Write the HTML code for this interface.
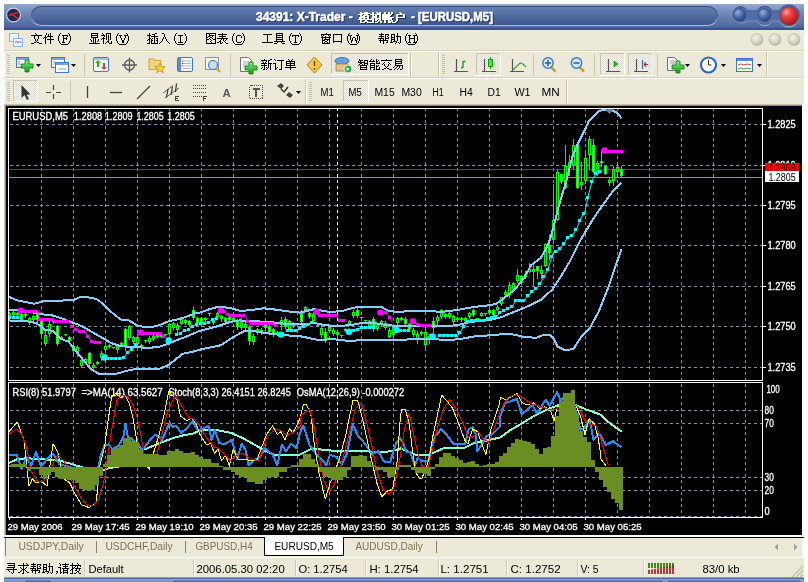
<!DOCTYPE html>
<html><head><meta charset="utf-8"><style>
html,body{margin:0;padding:0;background:#fff;width:808px;height:582px;overflow:hidden}
svg{position:absolute;left:0;top:0;display:block;will-change:transform}
text{font-family:"Liberation Sans",sans-serif}
</style></head><body>
<svg width="808" height="582" viewBox="0 0 808 582" shape-rendering="auto">
<defs>
<linearGradient id="tb" x1="0" y1="0" x2="0" y2="1">
 <stop offset="0" stop-color="#93a9cf"/><stop offset="0.3" stop-color="#768dba"/><stop offset="0.7" stop-color="#5a72a5"/><stop offset="1" stop-color="#475f96"/></linearGradient>
<linearGradient id="pill" x1="0" y1="0" x2="0" y2="1">
 <stop offset="0" stop-color="#4a6aa2"/><stop offset="0.5" stop-color="#5673aa"/><stop offset="1" stop-color="#3f5b94"/></linearGradient>
<radialGradient id="btn" cx="0.35" cy="0.3" r="0.8">
 <stop offset="0" stop-color="#8fb0e0"/><stop offset="0.5" stop-color="#4a6aa8"/><stop offset="1" stop-color="#223a70"/></radialGradient>
<radialGradient id="rbtn" cx="0.35" cy="0.3" r="0.8">
 <stop offset="0" stop-color="#ff9a9a"/><stop offset="0.35" stop-color="#e84040"/><stop offset="1" stop-color="#a81010"/></radialGradient>
<radialGradient id="gbtn" cx="0.4" cy="0.35" r="0.7">
 <stop offset="0" stop-color="#f4f2e8"/><stop offset="0.6" stop-color="#d6d3c4"/><stop offset="1" stop-color="#b3ae98"/></radialGradient>
<pattern id="chk" width="2" height="2" patternUnits="userSpaceOnUse"><rect width="2" height="2" fill="#f6f5ef"/><rect width="1" height="1" fill="#e0ddd0"/><rect x="1" y="1" width="1" height="1" fill="#e0ddd0"/></pattern>
<linearGradient id="gplus" x1="0" y1="0" x2="0" y2="1"><stop offset="0" stop-color="#7ef07e"/><stop offset="1" stop-color="#10a010"/></linearGradient>
</defs>
<rect x="4" y="4" width="800" height="26" fill="url(#tb)"/>
<rect x="4" y="28" width="800" height="2" fill="#3a5189"/>
<defs><linearGradient id="pstroke" x1="0" y1="0" x2="0" y2="1"><stop offset="0" stop-color="#33497a"/><stop offset="0.5" stop-color="#4a639a"/><stop offset="1" stop-color="#a8c0e6"/></linearGradient><linearGradient id="pfill" x1="0" y1="0" x2="0" y2="1"><stop offset="0" stop-color="#6580b1"/><stop offset="0.5" stop-color="#516ba0"/><stop offset="1" stop-color="#3d568e"/></linearGradient></defs>
<rect x="31.5" y="6.5" width="686" height="19" rx="9.5" fill="url(#pfill)" stroke="url(#pstroke)" stroke-width="1.2"/>
<circle cx="13.5" cy="15" r="6.9" fill="#17295a" stroke="#d0d4da" stroke-width="1.2"/>
<path d="M9.5 15.5 Q13 14.5 17.5 12.5 M11 14 Q14 15.5 17.5 18.5" stroke="#f01818" stroke-width="1.7" stroke-linecap="round" fill="none"/>
<path d="M739.6 6.5 a8.4 8.4 0 0 1 7.5 4.5 h10 a8.4 8.4 0 0 1 15 0 h7 a11 11 0 1 1 0 10 h-7 a8.4 8.4 0 0 1 -15 0 h-10 a8.4 8.4 0 1 1 -7.5 -14.5z" fill="#536ea4" stroke="url(#pstroke)" stroke-width="1"/>
<circle cx="739.6" cy="14.9" r="6.3" fill="url(#btn)" stroke="#2c4478" stroke-width="0.6"/>
<circle cx="764.6" cy="14.9" r="6.3" fill="url(#btn)" stroke="#2c4478" stroke-width="0.6"/>
<circle cx="789.1" cy="15.9" r="9" fill="url(#rbtn)" stroke="#8a2020" stroke-width="0.6"/>
<g font-family="Liberation Sans" font-weight="bold" font-size="12">
<text x="257" y="22" fill="#1c2b4c" stroke="#1c2b4c" stroke-width="0.45" opacity="0.8">34391: X-Trader -</text>
<text x="256" y="21" fill="#ffffff" stroke="#fff" stroke-width="0.45">34391: X-Trader -</text>
<text x="412" y="22" fill="#1c2b4c" stroke="#1c2b4c" stroke-width="0.45" opacity="0.8" textLength="82" lengthAdjust="spacingAndGlyphs">- [EURUSD,M5]</text>
<text x="411" y="21" fill="#ffffff" stroke="#fff" stroke-width="0.45" textLength="82" lengthAdjust="spacingAndGlyphs">- [EURUSD,M5]</text>
</g>
<path fill="#22335a" d="M361 13h2v1h-2zM365 13h4v1h-4zM373 13h2v1h-2zM377 13h2v1h-2zM380 13h2v1h-2zM385 13h2v1h-2zM389 13h2v1h-2zM392 13h2v1h-2zM400 13h2v1h-2zM361 14h10v1h-10zM373 14h2v1h-2zM378 14h4v1h-4zM385 14h2v1h-2zM389 14h2v1h-2zM392 14h2v1h-2zM401 14h2v1h-2zM359 15h5v1h-5zM365 15h4v1h-4zM371 15h11v1h-11zM383 15h10v1h-10zM397 15h9v1h-9zM361 16h2v1h-2zM364 16h6v1h-6zM373 16h2v1h-2zM376 16h2v1h-2zM380 16h2v1h-2zM383 16h9v1h-9zM397 16h2v1h-2zM404 16h2v1h-2zM361 17h5v1h-5zM368 17h2v1h-2zM373 17h5v1h-5zM380 17h2v1h-2zM383 17h8v1h-8zM397 17h2v1h-2zM404 17h2v1h-2zM360 18h10v1h-10zM373 18h5v1h-5zM380 18h2v1h-2zM383 18h12v1h-12zM397 18h9v1h-9zM360 19h3v1h-3zM364 19h2v1h-2zM368 19h2v1h-2zM372 19h3v1h-3zM376 19h6v1h-6zM383 19h10v1h-10zM397 19h2v1h-2zM359 20h16v1h-16zM376 20h3v1h-3zM380 20h2v1h-2zM383 20h10v1h-10zM397 20h2v1h-2zM361 21h2v1h-2zM366 21h2v1h-2zM373 21h2v1h-2zM376 21h2v1h-2zM379 21h3v1h-3zM385 21h2v1h-2zM389 21h2v1h-2zM392 21h2v1h-2zM397 21h2v1h-2zM361 22h2v1h-2zM365 22h4v1h-4zM373 22h2v1h-2zM378 22h2v1h-2zM381 22h2v1h-2zM385 22h2v1h-2zM389 22h5v1h-5zM396 22h2v1h-2zM361 23h5v1h-5zM368 23h7v1h-7zM376 23h3v1h-3zM381 23h2v1h-2zM385 23h2v1h-2zM389 23h3v1h-3zM393 23h4v1h-4z"/>
<path fill="#ffffff" d="M360 12h2v1h-2zM364 12h4v1h-4zM372 12h2v1h-2zM376 12h2v1h-2zM379 12h2v1h-2zM384 12h2v1h-2zM388 12h2v1h-2zM391 12h2v1h-2zM399 12h2v1h-2zM360 13h10v1h-10zM372 13h2v1h-2zM377 13h4v1h-4zM384 13h2v1h-2zM388 13h2v1h-2zM391 13h2v1h-2zM400 13h2v1h-2zM358 14h5v1h-5zM364 14h4v1h-4zM370 14h11v1h-11zM382 14h10v1h-10zM396 14h9v1h-9zM360 15h2v1h-2zM363 15h6v1h-6zM372 15h2v1h-2zM375 15h2v1h-2zM379 15h2v1h-2zM382 15h9v1h-9zM396 15h2v1h-2zM403 15h2v1h-2zM360 16h5v1h-5zM367 16h2v1h-2zM372 16h5v1h-5zM379 16h2v1h-2zM382 16h8v1h-8zM396 16h2v1h-2zM403 16h2v1h-2zM359 17h10v1h-10zM372 17h5v1h-5zM379 17h2v1h-2zM382 17h12v1h-12zM396 17h9v1h-9zM359 18h3v1h-3zM363 18h2v1h-2zM367 18h2v1h-2zM371 18h3v1h-3zM375 18h6v1h-6zM382 18h10v1h-10zM396 18h2v1h-2zM358 19h16v1h-16zM375 19h3v1h-3zM379 19h2v1h-2zM382 19h10v1h-10zM396 19h2v1h-2zM360 20h2v1h-2zM365 20h2v1h-2zM372 20h2v1h-2zM375 20h2v1h-2zM378 20h3v1h-3zM384 20h2v1h-2zM388 20h2v1h-2zM391 20h2v1h-2zM396 20h2v1h-2zM360 21h2v1h-2zM364 21h4v1h-4zM372 21h2v1h-2zM377 21h2v1h-2zM380 21h2v1h-2zM384 21h2v1h-2zM388 21h5v1h-5zM395 21h2v1h-2zM360 22h5v1h-5zM367 22h7v1h-7zM375 22h3v1h-3zM380 22h2v1h-2zM384 22h2v1h-2zM388 22h3v1h-3zM392 22h4v1h-4z"/>
<rect x="4" y="30" width="800" height="20" fill="#ece9d8"/>
<rect x="4" y="50" width="800" height="1" fill="#d8d2bd"/>
<rect x="4" y="51" width="800" height="1" fill="#ffffff"/>
<rect x="9.5" y="33.5" width="9" height="8" fill="#eef4ff" stroke="#3a7be0" stroke-dasharray="1 1"/>
<rect x="13.5" y="38.5" width="9" height="8" fill="#eef4ff" stroke="#3a7be0" stroke-dasharray="1 1"/>
<path d="M15 43 l1.5 -2 l1.5 2 l1.5 -2 l1.5 2" stroke="#3a7be0" fill="none" stroke-width="0.8"/>
<path fill="#000" d="M35 33h1v1h-1zM46 33h1v1h-1zM50 33h1v1h-1zM36 34h1v1h-1zM46 34h1v1h-1zM48 34h1v1h-1zM50 34h1v1h-1zM31 35h11v1h-11zM45 35h1v1h-1zM48 35h1v1h-1zM50 35h1v1h-1zM34 36h1v1h-1zM38 36h1v1h-1zM45 36h1v1h-1zM47 36h6v1h-6zM34 37h1v1h-1zM38 37h1v1h-1zM44 37h3v1h-3zM50 37h1v1h-1zM34 38h1v1h-1zM38 38h1v1h-1zM43 38h1v1h-1zM45 38h1v1h-1zM50 38h1v1h-1zM35 39h1v1h-1zM37 39h1v1h-1zM45 39h1v1h-1zM47 39h7v1h-7zM35 40h1v1h-1zM37 40h1v1h-1zM45 40h1v1h-1zM50 40h1v1h-1zM36 41h1v1h-1zM45 41h1v1h-1zM50 41h1v1h-1zM34 42h2v1h-2zM37 42h2v1h-2zM45 42h1v1h-1zM50 42h1v1h-1zM31 43h3v1h-3zM39 43h3v1h-3zM45 43h1v1h-1zM50 43h1v1h-1z"/>
<path fill="#000" d="M60 33h1v1h-1zM59 34h1v1h-1zM59 35h1v1h-1zM58 36h1v1h-1zM58 37h1v1h-1zM58 38h1v1h-1zM58 39h1v1h-1zM58 40h1v1h-1zM59 41h1v1h-1zM59 42h1v1h-1zM60 43h1v1h-1z"/>
<path fill="#000" d="M68 33h1v1h-1zM69 34h1v1h-1zM69 35h1v1h-1zM70 36h1v1h-1zM70 37h1v1h-1zM70 38h1v1h-1zM70 39h1v1h-1zM70 40h1v1h-1zM69 41h1v1h-1zM69 42h1v1h-1zM68 43h1v1h-1z"/>
<g transform="translate(31,0)" fill="#000" shape-rendering="crispEdges"><path d="M31 35h6v1h-6zM32 35h1v8h-1zM33 38h3v1h-3zM35 37h1v3h-1zM31 42h3v1h-3zM36 36h1v1h-1z"/></g>
<rect x="61" y="44" width="7" height="1" fill="#000"/>
<path fill="#000" d="M91 33h7v1h-7zM102 33h1v1h-1zM106 33h5v1h-5zM91 34h1v1h-1zM97 34h1v1h-1zM103 34h1v1h-1zM106 34h1v1h-1zM110 34h1v1h-1zM91 35h7v1h-7zM101 35h4v1h-4zM106 35h1v1h-1zM108 35h1v1h-1zM110 35h1v1h-1zM91 36h1v1h-1zM97 36h1v1h-1zM104 36h1v1h-1zM106 36h1v1h-1zM108 36h1v1h-1zM110 36h1v1h-1zM91 37h7v1h-7zM103 37h1v1h-1zM106 37h1v1h-1zM108 37h1v1h-1zM110 37h1v1h-1zM93 38h1v1h-1zM95 38h1v1h-1zM102 38h3v1h-3zM106 38h1v1h-1zM108 38h1v1h-1zM110 38h1v1h-1zM90 39h1v1h-1zM93 39h1v1h-1zM95 39h1v1h-1zM98 39h1v1h-1zM101 39h1v1h-1zM103 39h1v1h-1zM106 39h1v1h-1zM108 39h1v1h-1zM110 39h1v1h-1zM91 40h1v1h-1zM93 40h1v1h-1zM95 40h1v1h-1zM98 40h1v1h-1zM103 40h1v1h-1zM108 40h1v1h-1zM91 41h1v1h-1zM93 41h1v1h-1zM95 41h1v1h-1zM97 41h1v1h-1zM103 41h1v1h-1zM107 41h2v1h-2zM111 41h1v1h-1zM93 42h1v1h-1zM95 42h1v1h-1zM103 42h1v1h-1zM106 42h1v1h-1zM108 42h1v1h-1zM111 42h1v1h-1zM89 43h11v1h-11zM103 43h1v1h-1zM105 43h1v1h-1zM109 43h3v1h-3z"/>
<path fill="#000" d="M118 33h1v1h-1zM117 34h1v1h-1zM117 35h1v1h-1zM116 36h1v1h-1zM116 37h1v1h-1zM116 38h1v1h-1zM116 39h1v1h-1zM116 40h1v1h-1zM117 41h1v1h-1zM117 42h1v1h-1zM118 43h1v1h-1z"/>
<path fill="#000" d="M126 33h1v1h-1zM127 34h1v1h-1zM127 35h1v1h-1zM128 36h1v1h-1zM128 37h1v1h-1zM128 38h1v1h-1zM128 39h1v1h-1zM128 40h1v1h-1zM127 41h1v1h-1zM127 42h1v1h-1zM126 43h1v1h-1z"/>
<g transform="translate(89,0)" fill="#000" shape-rendering="crispEdges"><path d="M30 35h3v1h-3zM35 35h3v1h-3zM31 36h1v2h-1zM36 36h1v2h-1zM32 38h1v2h-1zM35 38h1v2h-1zM33 40h2v3h-2z"/></g>
<rect x="119" y="44" width="7" height="1" fill="#000"/>
<path fill="#000" d="M149 33h1v1h-1zM155 33h2v1h-2zM162 33h2v1h-2zM149 34h1v1h-1zM152 34h3v1h-3zM164 34h1v1h-1zM147 35h4v1h-4zM154 35h1v1h-1zM164 35h1v1h-1zM149 36h1v1h-1zM151 36h7v1h-7zM164 36h1v1h-1zM149 37h1v1h-1zM154 37h1v1h-1zM163 37h1v1h-1zM165 37h1v1h-1zM149 38h2v1h-2zM152 38h1v1h-1zM154 38h1v1h-1zM156 38h2v1h-2zM163 38h1v1h-1zM165 38h1v1h-1zM148 39h2v1h-2zM151 39h1v1h-1zM154 39h1v1h-1zM157 39h1v1h-1zM162 39h1v1h-1zM166 39h1v1h-1zM147 40h1v1h-1zM149 40h1v1h-1zM151 40h2v1h-2zM154 40h1v1h-1zM156 40h2v1h-2zM162 40h1v1h-1zM166 40h1v1h-1zM149 41h1v1h-1zM151 41h1v1h-1zM154 41h1v1h-1zM157 41h1v1h-1zM161 41h1v1h-1zM167 41h1v1h-1zM149 42h1v1h-1zM151 42h1v1h-1zM154 42h1v1h-1zM157 42h1v1h-1zM160 42h1v1h-1zM168 42h1v1h-1zM147 43h3v1h-3zM151 43h7v1h-7zM159 43h1v1h-1zM169 43h1v1h-1z"/>
<path fill="#000" d="M176 33h1v1h-1zM175 34h1v1h-1zM175 35h1v1h-1zM174 36h1v1h-1zM174 37h1v1h-1zM174 38h1v1h-1zM174 39h1v1h-1zM174 40h1v1h-1zM175 41h1v1h-1zM175 42h1v1h-1zM176 43h1v1h-1z"/>
<path fill="#000" d="M184 33h1v1h-1zM185 34h1v1h-1zM185 35h1v1h-1zM186 36h1v1h-1zM186 37h1v1h-1zM186 38h1v1h-1zM186 39h1v1h-1zM186 40h1v1h-1zM185 41h1v1h-1zM185 42h1v1h-1zM184 43h1v1h-1z"/>
<g transform="translate(147,0)" fill="#000" shape-rendering="crispEdges"><path d="M31 35h5v1h-5zM33 35h1v8h-1zM31 42h5v1h-5z"/></g>
<rect x="177" y="44" width="7" height="1" fill="#000"/>
<path fill="#000" d="M206 33h10v1h-10zM222 33h1v1h-1zM206 34h1v1h-1zM209 34h1v1h-1zM215 34h1v1h-1zM218 34h9v1h-9zM206 35h1v1h-1zM209 35h5v1h-5zM215 35h1v1h-1zM222 35h1v1h-1zM206 36h1v1h-1zM208 36h2v1h-2zM212 36h1v1h-1zM215 36h1v1h-1zM219 36h7v1h-7zM206 37h2v1h-2zM210 37h2v1h-2zM215 37h1v1h-1zM222 37h1v1h-1zM206 38h1v1h-1zM209 38h1v1h-1zM212 38h1v1h-1zM215 38h1v1h-1zM217 38h11v1h-11zM206 39h3v1h-3zM210 39h1v1h-1zM213 39h3v1h-3zM221 39h1v1h-1zM223 39h1v1h-1zM226 39h1v1h-1zM206 40h1v1h-1zM211 40h1v1h-1zM215 40h1v1h-1zM220 40h1v1h-1zM223 40h1v1h-1zM225 40h1v1h-1zM206 41h1v1h-1zM210 41h1v1h-1zM215 41h1v1h-1zM219 41h2v1h-2zM224 41h1v1h-1zM206 42h1v1h-1zM211 42h1v1h-1zM215 42h1v1h-1zM217 42h2v1h-2zM220 42h1v1h-1zM222 42h1v1h-1zM225 42h1v1h-1zM206 43h10v1h-10zM220 43h2v1h-2zM226 43h2v1h-2z"/>
<path fill="#000" d="M234 33h1v1h-1zM233 34h1v1h-1zM233 35h1v1h-1zM232 36h1v1h-1zM232 37h1v1h-1zM232 38h1v1h-1zM232 39h1v1h-1zM232 40h1v1h-1zM233 41h1v1h-1zM233 42h1v1h-1zM234 43h1v1h-1z"/>
<path fill="#000" d="M242 33h1v1h-1zM243 34h1v1h-1zM243 35h1v1h-1zM244 36h1v1h-1zM244 37h1v1h-1zM244 38h1v1h-1zM244 39h1v1h-1zM244 40h1v1h-1zM243 41h1v1h-1zM243 42h1v1h-1zM242 43h1v1h-1z"/>
<g transform="translate(205,0)" fill="#000" shape-rendering="crispEdges"><path d="M32 35h4v1h-4zM31 36h1v6h-1zM32 42h4v1h-4zM36 36h1v2h-1zM36 41h1v1h-1z"/></g>
<rect x="235" y="44" width="7" height="1" fill="#000"/>
<path fill="#000" d="M276 33h7v1h-7zM263 34h9v1h-9zM276 34h1v1h-1zM282 34h1v1h-1zM267 35h1v1h-1zM276 35h7v1h-7zM267 36h1v1h-1zM276 36h1v1h-1zM282 36h1v1h-1zM267 37h1v1h-1zM276 37h7v1h-7zM267 38h1v1h-1zM276 38h1v1h-1zM282 38h1v1h-1zM267 39h1v1h-1zM276 39h7v1h-7zM267 40h1v1h-1zM276 40h1v1h-1zM282 40h1v1h-1zM267 41h1v1h-1zM274 41h11v1h-11zM262 42h11v1h-11zM277 42h1v1h-1zM281 42h1v1h-1zM274 43h3v1h-3zM282 43h3v1h-3z"/>
<path fill="#000" d="M291 33h1v1h-1zM290 34h1v1h-1zM290 35h1v1h-1zM289 36h1v1h-1zM289 37h1v1h-1zM289 38h1v1h-1zM289 39h1v1h-1zM289 40h1v1h-1zM290 41h1v1h-1zM290 42h1v1h-1zM291 43h1v1h-1z"/>
<path fill="#000" d="M299 33h1v1h-1zM300 34h1v1h-1zM300 35h1v1h-1zM301 36h1v1h-1zM301 37h1v1h-1zM301 38h1v1h-1zM301 39h1v1h-1zM301 40h1v1h-1zM300 41h1v1h-1zM300 42h1v1h-1zM299 43h1v1h-1z"/>
<g transform="translate(262,0)" fill="#000" shape-rendering="crispEdges"><path d="M30 35h7v1h-7zM30 36h1v1h-1zM36 36h1v1h-1zM33 35h1v8h-1zM32 42h3v1h-3z"/></g>
<rect x="292" y="44" width="7" height="1" fill="#000"/>
<path fill="#000" d="M326 33h1v1h-1zM321 34h10v1h-10zM333 34h9v1h-9zM321 35h1v1h-1zM323 35h1v1h-1zM328 35h1v1h-1zM330 35h1v1h-1zM333 35h1v1h-1zM341 35h1v1h-1zM322 36h1v1h-1zM325 36h1v1h-1zM329 36h1v1h-1zM333 36h1v1h-1zM341 36h1v1h-1zM321 37h10v1h-10zM333 37h1v1h-1zM341 37h1v1h-1zM322 38h1v1h-1zM325 38h1v1h-1zM329 38h1v1h-1zM333 38h1v1h-1zM341 38h1v1h-1zM322 39h1v1h-1zM324 39h6v1h-6zM333 39h1v1h-1zM341 39h1v1h-1zM322 40h3v1h-3zM327 40h1v1h-1zM329 40h1v1h-1zM333 40h1v1h-1zM341 40h1v1h-1zM322 41h1v1h-1zM325 41h2v1h-2zM329 41h1v1h-1zM333 41h9v1h-9zM322 42h1v1h-1zM324 42h1v1h-1zM327 42h1v1h-1zM329 42h1v1h-1zM333 42h1v1h-1zM341 42h1v1h-1zM322 43h8v1h-8z"/>
<path fill="#000" d="M349 33h1v1h-1zM348 34h1v1h-1zM348 35h1v1h-1zM347 36h1v1h-1zM347 37h1v1h-1zM347 38h1v1h-1zM347 39h1v1h-1zM347 40h1v1h-1zM348 41h1v1h-1zM348 42h1v1h-1zM349 43h1v1h-1z"/>
<path fill="#000" d="M357 33h1v1h-1zM358 34h1v1h-1zM358 35h1v1h-1zM359 36h1v1h-1zM359 37h1v1h-1zM359 38h1v1h-1zM359 39h1v1h-1zM359 40h1v1h-1zM358 41h1v1h-1zM358 42h1v1h-1zM357 43h1v1h-1z"/>
<g transform="translate(320,0)" fill="#000" shape-rendering="crispEdges"><path d="M29 35h3v1h-3zM36 35h3v1h-3zM30 36h1v4h-1zM37 36h1v4h-1zM31 40h1v3h-1zM36 40h1v3h-1zM33 37h2v1h-2zM32 38h1v3h-1zM35 38h1v3h-1z"/></g>
<rect x="350" y="44" width="7" height="1" fill="#000"/>
<path fill="#000" d="M381 33h1v1h-1zM397 33h1v1h-1zM379 34h5v1h-5zM385 34h4v1h-4zM391 34h4v1h-4zM397 34h1v1h-1zM381 35h1v1h-1zM385 35h1v1h-1zM388 35h1v1h-1zM391 35h1v1h-1zM394 35h1v1h-1zM397 35h1v1h-1zM379 36h5v1h-5zM385 36h1v1h-1zM387 36h1v1h-1zM391 36h1v1h-1zM394 36h1v1h-1zM396 36h5v1h-5zM381 37h1v1h-1zM385 37h1v1h-1zM388 37h1v1h-1zM391 37h4v1h-4zM397 37h1v1h-1zM400 37h1v1h-1zM378 38h6v1h-6zM385 38h4v1h-4zM391 38h1v1h-1zM394 38h1v1h-1zM397 38h1v1h-1zM400 38h1v1h-1zM380 39h1v1h-1zM383 39h1v1h-1zM385 39h1v1h-1zM391 39h4v1h-4zM397 39h1v1h-1zM400 39h1v1h-1zM379 40h9v1h-9zM391 40h1v1h-1zM394 40h1v1h-1zM397 40h1v1h-1zM400 40h1v1h-1zM380 41h1v1h-1zM383 41h1v1h-1zM387 41h1v1h-1zM391 41h1v1h-1zM393 41h4v1h-4zM400 41h1v1h-1zM380 42h1v1h-1zM383 42h1v1h-1zM386 42h2v1h-2zM390 42h3v1h-3zM396 42h1v1h-1zM398 42h1v1h-1zM400 42h1v1h-1zM383 43h1v1h-1zM395 43h1v1h-1zM399 43h1v1h-1z"/>
<path fill="#000" d="M407 33h1v1h-1zM406 34h1v1h-1zM406 35h1v1h-1zM405 36h1v1h-1zM405 37h1v1h-1zM405 38h1v1h-1zM405 39h1v1h-1zM405 40h1v1h-1zM406 41h1v1h-1zM406 42h1v1h-1zM407 43h1v1h-1z"/>
<path fill="#000" d="M415 33h1v1h-1zM416 34h1v1h-1zM416 35h1v1h-1zM417 36h1v1h-1zM417 37h1v1h-1zM417 38h1v1h-1zM417 39h1v1h-1zM417 40h1v1h-1zM416 41h1v1h-1zM416 42h1v1h-1zM415 43h1v1h-1z"/>
<g transform="translate(378,0)" fill="#000" shape-rendering="crispEdges"><path d="M30 35h3v1h-3zM35 35h3v1h-3zM31 35h1v8h-1zM36 35h1v8h-1zM32 38h4v1h-4zM30 42h3v1h-3zM35 42h3v1h-3z"/></g>
<rect x="408" y="44" width="7" height="1" fill="#000"/>
<circle cx="757" cy="39.5" r="6" fill="url(#gbtn)" stroke="#b9b49f" stroke-width="0.6"/>
<circle cx="775" cy="39.5" r="6" fill="url(#gbtn)" stroke="#b9b49f" stroke-width="0.6"/>
<circle cx="794" cy="39.5" r="6" fill="url(#gbtn)" stroke="#b9b49f" stroke-width="0.6"/>
<rect x="5" y="52" width="799" height="52" fill="#ece9d8"/>
<rect x="4" y="77" width="800" height="1" fill="#d8d2bd"/>
<rect x="4" y="78" width="800" height="1" fill="#ffffff"/>
<rect x="7" y="55" width="3" height="1" fill="#c4bfa8"/>
<rect x="7" y="57" width="3" height="1" fill="#c4bfa8"/>
<rect x="7" y="59" width="3" height="1" fill="#c4bfa8"/>
<rect x="7" y="61" width="3" height="1" fill="#c4bfa8"/>
<rect x="7" y="63" width="3" height="1" fill="#c4bfa8"/>
<rect x="7" y="65" width="3" height="1" fill="#c4bfa8"/>
<rect x="7" y="67" width="3" height="1" fill="#c4bfa8"/>
<rect x="7" y="69" width="3" height="1" fill="#c4bfa8"/>
<rect x="7" y="71" width="3" height="1" fill="#c4bfa8"/>
<rect x="7" y="73" width="3" height="1" fill="#c4bfa8"/>
<rect x="16.5" y="57.5" width="12" height="10" fill="#fff" stroke="#3d77c8"/><rect x="17" y="58" width="11" height="2" fill="#7fa8e0"/>
<path d="M19 61 v4" stroke="#6a8ab8"/>
<path d="M25 60 h4 v4 h4 v4 h-4 v4 h-4 v-4 h-4 v-4 h4z" fill="url(#gplus)" stroke="#0a7a0a" stroke-width="0.8"/>
<path d="M36 64 h5 l-2.5 3z" fill="#000"/>
<rect x="51.5" y="57.5" width="13" height="10" fill="#fff" stroke="#3d77c8"/><rect x="52" y="58" width="12" height="2" fill="#7fa8e0"/>
<rect x="55.5" y="62.5" width="13" height="10" fill="#fff" stroke="#3d77c8"/><rect x="56" y="63" width="12" height="2" fill="#7fa8e0"/>
<path d="M54 61 v4 M55 64 h8 M58 69 h8" stroke="#6a8ab8" stroke-width="0.8"/>
<path d="M71 64 h5 l-2.5 3z" fill="#000"/>
<rect x="84" y="54" width="1" height="22" fill="#cdc6ad"/>
<rect x="93.5" y="57.5" width="15" height="14" rx="1.5" fill="#fff" stroke="#3d77c8"/><rect x="94" y="58" width="14" height="2" fill="#9fc0ee"/>
<path d="M97 67 v-4 h-2 l3 -3 l3 3 h-2 v4z" fill="#20b020"/><path d="M103 63 v4 h-2 l3 3 l3 -3 h-2 v-4z" fill="#e04020"/>
<circle cx="129.5" cy="65" r="5" fill="none" stroke="#5a5a5a" stroke-width="1.3"/><path d="M129.5 57.5 v15 M122 65 h15" stroke="#5a5a5a" stroke-width="1.3"/>
<path d="M149 59 h5 l1 1.5 h6 v9 h-12z" fill="#f2d37a" stroke="#c49a30" stroke-width="0.8"/>
<path d="M160 63 l1.6 3.4 3.6 .4 -2.7 2.4 .8 3.6 -3.3 -1.9 -3.3 1.9 .8 -3.6 -2.7 -2.4 3.6 -.4z" fill="#f7d040" stroke="#b08a10" stroke-width="0.7"/>
<rect x="177.5" y="57.5" width="15" height="14" rx="1.5" fill="#fff" stroke="#3d77c8"/><rect x="178" y="58" width="3" height="13" fill="#5a8ad8"/>
<path d="M183 61h8M183 63.5h8M183 66h8M183 68.5h8" stroke="#8aa0c8" stroke-width="0.8"/><path d="M182 61h1M182 63.5h1M182 66h1" stroke="#d02020"/>
<rect x="205.5" y="57.5" width="13" height="12" fill="#f8f8f8" stroke="#909090"/><circle cx="213" cy="65" r="4.5" fill="#c8dcf4" stroke="#4a78c0" stroke-width="1.2"/><path d="M216 68 l4 4" stroke="#c8a030" stroke-width="2"/>
<rect x="230" y="54" width="1" height="22" fill="#cdc6ad"/>
<path d="M240.5 57.5 h8 l3 3 v11 h-11z" fill="#fff" stroke="#707070"/><path d="M243 62h6M243 64h6M243 66h4" stroke="#909090" stroke-width="0.8"/>
<path d="M249 64 h4 v4 h4 v4 h-4 v4 h-4 v-4 h-4 v-4 h4z" fill="url(#gplus)" stroke="#0a7a0a" stroke-width="0.8" transform="translate(0,-2) scale(1)"/>
<path fill="#000" d="M264 59h1v1h-1zM270 59h2v1h-2zM274 59h1v1h-1zM288 59h1v1h-1zM292 59h1v1h-1zM261 60h6v1h-6zM268 60h2v1h-2zM275 60h1v1h-1zM277 60h7v1h-7zM289 60h1v1h-1zM291 60h1v1h-1zM262 61h1v1h-1zM266 61h1v1h-1zM268 61h1v1h-1zM281 61h1v1h-1zM286 61h9v1h-9zM263 62h1v1h-1zM265 62h1v1h-1zM268 62h1v1h-1zM281 62h1v1h-1zM286 62h1v1h-1zM290 62h1v1h-1zM294 62h1v1h-1zM261 63h6v1h-6zM268 63h4v1h-4zM273 63h3v1h-3zM281 63h1v1h-1zM286 63h9v1h-9zM264 64h1v1h-1zM268 64h1v1h-1zM270 64h1v1h-1zM275 64h1v1h-1zM281 64h1v1h-1zM286 64h1v1h-1zM290 64h1v1h-1zM294 64h1v1h-1zM261 65h6v1h-6zM268 65h1v1h-1zM270 65h1v1h-1zM275 65h1v1h-1zM281 65h1v1h-1zM286 65h9v1h-9zM264 66h1v1h-1zM268 66h1v1h-1zM270 66h1v1h-1zM275 66h1v1h-1zM281 66h1v1h-1zM290 66h1v1h-1zM262 67h1v1h-1zM264 67h1v1h-1zM266 67h1v1h-1zM268 67h1v1h-1zM270 67h1v1h-1zM275 67h1v1h-1zM277 67h1v1h-1zM281 67h1v1h-1zM285 67h11v1h-11zM261 68h1v1h-1zM264 68h1v1h-1zM267 68h1v1h-1zM270 68h1v1h-1zM275 68h2v1h-2zM281 68h1v1h-1zM290 68h1v1h-1zM263 69h2v1h-2zM266 69h1v1h-1zM270 69h1v1h-1zM275 69h1v1h-1zM279 69h3v1h-3zM290 69h1v1h-1z"/>
<path d="M314.5 57 l7.5 8 -7.5 8 -7.5 -8z" fill="#f5c842" stroke="#a57810" stroke-width="0.9"/><path d="M314.5 61 v5 M314.5 68 v1.5" stroke="#7a3a00" stroke-width="1.5"/>
<rect x="331" y="53" width="78" height="22" fill="url(#chk)"/>
<path d="M331.5 75 V53.5 H409" stroke="#c9c3ab" fill="none"/>
<path d="M408.5 53 V74.5 H331" stroke="#ffffff" fill="none"/>
<rect x="410" y="52" width="1" height="25" fill="#cdc6ad"/><rect x="411" y="52" width="1" height="25" fill="#fff"/>
<ellipse cx="342" cy="61" rx="7" ry="3.5" fill="#6aa0e0" stroke="#2a60b0" stroke-width="0.8"/><path d="M336 64 h12 v7 h-12z" fill="#e8c880" stroke="#a08040" stroke-width="0.8"/><circle cx="348" cy="69" r="4" fill="#20b040" stroke="#fff" stroke-width="0.8"/><path d="M346.5 67 l3 2 -3 2z" fill="#fff"/>
<path fill="#000" d="M359 59h1v1h-1zM371 59h1v1h-1zM376 59h1v1h-1zM386 59h1v1h-1zM395 59h7v1h-7zM359 60h4v1h-4zM364 60h4v1h-4zM370 60h1v1h-1zM373 60h1v1h-1zM376 60h1v1h-1zM378 60h1v1h-1zM381 60h11v1h-11zM395 60h1v1h-1zM401 60h1v1h-1zM358 61h1v1h-1zM360 61h1v1h-1zM364 61h1v1h-1zM367 61h1v1h-1zM369 61h6v1h-6zM376 61h2v1h-2zM395 61h7v1h-7zM358 62h7v1h-7zM367 62h1v1h-1zM376 62h1v1h-1zM379 62h1v1h-1zM384 62h1v1h-1zM388 62h1v1h-1zM395 62h1v1h-1zM401 62h1v1h-1zM360 63h2v1h-2zM364 63h4v1h-4zM370 63h5v1h-5zM376 63h4v1h-4zM383 63h1v1h-1zM389 63h1v1h-1zM395 63h7v1h-7zM359 64h1v1h-1zM362 64h1v1h-1zM364 64h1v1h-1zM367 64h1v1h-1zM370 64h1v1h-1zM374 64h1v1h-1zM382 64h1v1h-1zM384 64h1v1h-1zM388 64h1v1h-1zM390 64h1v1h-1zM395 64h1v1h-1zM358 65h1v1h-1zM360 65h7v1h-7zM370 65h5v1h-5zM376 65h1v1h-1zM378 65h1v1h-1zM384 65h1v1h-1zM388 65h1v1h-1zM395 65h8v1h-8zM360 66h1v1h-1zM366 66h1v1h-1zM370 66h1v1h-1zM374 66h1v1h-1zM376 66h2v1h-2zM385 66h1v1h-1zM387 66h1v1h-1zM394 66h1v1h-1zM397 66h1v1h-1zM399 66h1v1h-1zM402 66h1v1h-1zM360 67h7v1h-7zM370 67h5v1h-5zM376 67h1v1h-1zM379 67h1v1h-1zM386 67h1v1h-1zM393 67h1v1h-1zM396 67h1v1h-1zM399 67h1v1h-1zM402 67h1v1h-1zM360 68h1v1h-1zM366 68h1v1h-1zM370 68h1v1h-1zM374 68h1v1h-1zM376 68h1v1h-1zM379 68h1v1h-1zM384 68h2v1h-2zM387 68h2v1h-2zM395 68h1v1h-1zM398 68h1v1h-1zM402 68h1v1h-1zM360 69h7v1h-7zM370 69h1v1h-1zM373 69h2v1h-2zM376 69h4v1h-4zM382 69h2v1h-2zM389 69h3v1h-3zM394 69h1v1h-1zM397 69h1v1h-1zM400 69h2v1h-2z"/>
<rect x="438" y="52" width="1" height="25" fill="#cdc6ad"/><rect x="439" y="52" width="1" height="25" fill="#fff"/>
<rect x="442" y="55" width="3" height="1" fill="#c4bfa8"/>
<rect x="442" y="57" width="3" height="1" fill="#c4bfa8"/>
<rect x="442" y="59" width="3" height="1" fill="#c4bfa8"/>
<rect x="442" y="61" width="3" height="1" fill="#c4bfa8"/>
<rect x="442" y="63" width="3" height="1" fill="#c4bfa8"/>
<rect x="442" y="65" width="3" height="1" fill="#c4bfa8"/>
<rect x="442" y="67" width="3" height="1" fill="#c4bfa8"/>
<rect x="442" y="69" width="3" height="1" fill="#c4bfa8"/>
<rect x="442" y="71" width="3" height="1" fill="#c4bfa8"/>
<rect x="442" y="73" width="3" height="1" fill="#c4bfa8"/>
<path d="M456.5 59 v13 M454 71.5 h14" stroke="#555" stroke-width="1.2"/>
<path d="M463 61 v7 M463 61.5 h2.5 M463 67.5 h-2" stroke="#10a010" stroke-width="1.3"/>
<rect x="476" y="53" width="25" height="23" fill="url(#chk)"/>
<path d="M476.5 76 V53.5 H501" stroke="#c9c3ab" fill="none"/>
<path d="M500.5 53 V75.5 H476" stroke="#ffffff" fill="none"/>
<path d="M484.5 59 v13 M482 71.5 h14" stroke="#555" stroke-width="1.2"/>
<path d="M490.5 57 v12" stroke="#10a010"/><rect x="488.5" y="59.5" width="4" height="7" fill="#50e050" stroke="#10a010"/>
<path d="M512.5 59 v13 M510 71.5 h14" stroke="#555" stroke-width="1.2"/>
<path d="M513 70 l4 -4 3 -3 3 1 3 3" stroke="#40a040" fill="none" stroke-width="1.2"/>
<rect x="533" y="54" width="1" height="22" fill="#cdc6ad"/>
<path d="M551 67 l4.5 4.5" stroke="#c8a030" stroke-width="2.5"/><circle cx="548" cy="63" r="5.2" fill="#d0e4fa" stroke="#3a78d0" stroke-width="1.4"/>
<path d="M545 63 h6" stroke="#3a60a0" stroke-width="1.6"/>
<path d="M548 60 v6" stroke="#3a60a0" stroke-width="1.6"/>
<path d="M579.5 67 l4.5 4.5" stroke="#c8a030" stroke-width="2.5"/><circle cx="576.5" cy="63" r="5.2" fill="#d0e4fa" stroke="#3a78d0" stroke-width="1.4"/>
<path d="M573.5 63 h6" stroke="#3a60a0" stroke-width="1.6"/>
<rect x="594" y="54" width="1" height="22" fill="#cdc6ad"/>
<rect x="600" y="53" width="25" height="23" fill="url(#chk)"/>
<path d="M600.5 76 V53.5 H625" stroke="#c9c3ab" fill="none"/>
<path d="M624.5 53 V75.5 H600" stroke="#ffffff" fill="none"/>
<path d="M608.5 59 v13 M606 71.5 h14" stroke="#555" stroke-width="1.2"/>
<path d="M614 61 l4 3 -4 3z" fill="#10c010" stroke="#0a8a0a" stroke-width="0.6"/>
<rect x="628" y="53" width="25" height="23" fill="url(#chk)"/>
<path d="M628.5 76 V53.5 H653" stroke="#c9c3ab" fill="none"/>
<path d="M652.5 53 V75.5 H628" stroke="#ffffff" fill="none"/>
<path d="M636.5 59 v13 M634 71.5 h14" stroke="#555" stroke-width="1.2"/>
<path d="M642.5 60 v9" stroke="#2a70c0" stroke-width="1.2"/><path d="M644 64.5 h4 M644 64.5 l2 -2 M644 64.5 l2 2" stroke="#d02020" stroke-width="1.2"/>
<rect x="657" y="54" width="1" height="22" fill="#cdc6ad"/>
<path d="M667.5 57.5 h7 l3 3 v10 h-10z" fill="#f4f4f4" stroke="#707070"/><path d="M670 61h5M670 63h5" stroke="#909090" stroke-width="0.8"/>
<path d="M676 64 h4 v4 h4 v4 h-4 v4 h-4 v-4 h-4 v-4 h4z" fill="url(#gplus)" stroke="#0a7a0a" stroke-width="0.8" transform="translate(0,-3)"/>
<path d="M685 64 h5 l-2.5 3z" fill="#000"/>
<circle cx="708.5" cy="65" r="7.5" fill="#fff" stroke="#2a68c8" stroke-width="2.2"/><path d="M708.5 60 v5 h3" stroke="#333" stroke-width="1" fill="none"/>
<path d="M721 64 h5 l-2.5 3z" fill="#000"/>
<rect x="736.5" y="58.5" width="16" height="13" fill="#fff" stroke="#3d77c8" stroke-width="1"/><rect x="737" y="59" width="15" height="2" fill="#5a8ad8"/><path d="M738 65 l3 -1 3 1 3 -1 4 1" stroke="#c03030" fill="none" stroke-width="0.9"/><path d="M738 69 l3 -1 3 1 3 -1 4 1" stroke="#30a030" fill="none" stroke-width="0.9"/>
<path d="M757 64 h5 l-2.5 3z" fill="#000"/>
<rect x="766" y="52" width="1" height="25" fill="#cdc6ad"/><rect x="767" y="52" width="1" height="25" fill="#fff"/>
<rect x="7" y="82" width="3" height="1" fill="#c4bfa8"/>
<rect x="7" y="84" width="3" height="1" fill="#c4bfa8"/>
<rect x="7" y="86" width="3" height="1" fill="#c4bfa8"/>
<rect x="7" y="88" width="3" height="1" fill="#c4bfa8"/>
<rect x="7" y="90" width="3" height="1" fill="#c4bfa8"/>
<rect x="7" y="92" width="3" height="1" fill="#c4bfa8"/>
<rect x="7" y="94" width="3" height="1" fill="#c4bfa8"/>
<rect x="7" y="96" width="3" height="1" fill="#c4bfa8"/>
<rect x="7" y="98" width="3" height="1" fill="#c4bfa8"/>
<rect x="7" y="100" width="3" height="1" fill="#c4bfa8"/>
<rect x="13" y="80" width="25" height="22" fill="url(#chk)"/>
<path d="M13.5 102 V80.5 H38" stroke="#c9c3ab" fill="none"/>
<path d="M37.5 80 V101.5 H13" stroke="#ffffff" fill="none"/>
<path d="M21.5 85 v13 l3 -3 2.5 5 2 -1 -2.5 -4.5 h4z" fill="#333"/>
<path d="M53.5 85 v5 M53.5 94 v5 M46 92.5 h5 M56 92.5 h5" stroke="#444" stroke-width="1.2"/>
<rect x="70" y="81" width="1" height="20" fill="#cdc6ad"/>
<path d="M87.5 86 v12" stroke="#444" stroke-width="1.3"/>
<path d="M110 92.5 h12" stroke="#444" stroke-width="1.3"/>
<path d="M137 99 l13 -13" stroke="#444" stroke-width="1.2"/>
<path d="M163 93 L173 85.5 M165 98 L179 88" stroke="#666" stroke-width="1"/><path d="M166.5 97.5 L168 89 M171 95 L172.5 86.5 M175.5 92 L176.5 83.5" stroke="#333" stroke-width="1.2" fill="none"/>
<path d="M175 96h4M175 96v5M175 98.5h3M175 100.5h4" stroke="#444" stroke-width="1" shape-rendering="crispEdges" fill="none"/>
<path d="M193 85.5h14M193 88.5h14M193 92.5h14M193 96.5h9" stroke="#444" stroke-width="1" stroke-dasharray="1 1" shape-rendering="crispEdges"/>
<path d="M203 96h4M203 96v5M203 98.5h3" stroke="#444" stroke-width="1" shape-rendering="crispEdges" fill="none"/>
<text x="222.5" y="97" font-family="Liberation Sans" font-weight="bold" font-size="11.5" fill="#555">A</text>
<rect x="249.5" y="85.5" width="13" height="13" fill="none" stroke="#444" stroke-dasharray="1 1" shape-rendering="crispEdges"/><path d="M250 85.5h3" stroke="#444"/><path d="M252.5 88.5h7M256 88.5v8" stroke="#555" stroke-width="2" shape-rendering="crispEdges"/>
<path d="M277 86 l4 -3 l3 3 l-3 3z" fill="#444"/><path d="M281 89 l3 3 l4 -5" stroke="#333" stroke-width="1.5" fill="none"/><path d="M286 95 l3 -3 l4 3 l-3 3z" fill="#444"/>
<path d="M296 91 h5 l-2.5 3z" fill="#000"/>
<rect x="305" y="79" width="1" height="25" fill="#cdc6ad"/><rect x="306" y="79" width="1" height="25" fill="#fff"/>
<rect x="309" y="82" width="3" height="1" fill="#c4bfa8"/>
<rect x="309" y="84" width="3" height="1" fill="#c4bfa8"/>
<rect x="309" y="86" width="3" height="1" fill="#c4bfa8"/>
<rect x="309" y="88" width="3" height="1" fill="#c4bfa8"/>
<rect x="309" y="90" width="3" height="1" fill="#c4bfa8"/>
<rect x="309" y="92" width="3" height="1" fill="#c4bfa8"/>
<rect x="309" y="94" width="3" height="1" fill="#c4bfa8"/>
<rect x="309" y="96" width="3" height="1" fill="#c4bfa8"/>
<rect x="309" y="98" width="3" height="1" fill="#c4bfa8"/>
<rect x="309" y="100" width="3" height="1" fill="#c4bfa8"/>
<rect x="343" y="80" width="26" height="22" fill="url(#chk)"/>
<path d="M343.5 102 V80.5 H369" stroke="#c9c3ab" fill="none"/>
<path d="M368.5 80 V101.5 H343" stroke="#ffffff" fill="none"/>
<text x="320.46" y="96" font-size="10" font-weight="normal" fill="#000" textLength="13.24" lengthAdjust="spacingAndGlyphs" xml:space="preserve" >M1</text>
<text x="348.46" y="96" font-size="10" font-weight="normal" fill="#000" textLength="13.24" lengthAdjust="spacingAndGlyphs" xml:space="preserve" >M5</text>
<text x="374.44" y="96" font-size="10" font-weight="normal" fill="#000" textLength="20.26" lengthAdjust="spacingAndGlyphs" xml:space="preserve" >M15</text>
<text x="401.44" y="96" font-size="10" font-weight="normal" fill="#000" textLength="20.26" lengthAdjust="spacingAndGlyphs" xml:space="preserve" >M30</text>
<text x="432.48" y="96" font-size="10" font-weight="normal" fill="#000" textLength="11.13" lengthAdjust="spacingAndGlyphs" xml:space="preserve" >H1</text>
<text x="459.46" y="96" font-size="10" font-weight="normal" fill="#000" textLength="13.24" lengthAdjust="spacingAndGlyphs" xml:space="preserve" >H4</text>
<text x="487.46" y="96" font-size="10" font-weight="normal" fill="#000" textLength="13.24" lengthAdjust="spacingAndGlyphs" xml:space="preserve" >D1</text>
<text x="514.45" y="96" font-size="10" font-weight="normal" fill="#000" textLength="16.18" lengthAdjust="spacingAndGlyphs" xml:space="preserve" >W1</text>
<text x="541.42" y="96" font-size="10" font-weight="normal" fill="#000" textLength="18.26" lengthAdjust="spacingAndGlyphs" xml:space="preserve" >MN</text>
<rect x="566" y="79" width="1" height="25" fill="#cdc6ad"/><rect x="567" y="79" width="1" height="25" fill="#fff"/>
<rect x="4" y="104" width="798" height="1" fill="#c9c3a9"/><rect x="5" y="105" width="797" height="1" fill="#948c6e"/>
<rect x="4" y="104" width="1" height="431" fill="#c9c3a9"/><rect x="5" y="105" width="1" height="430" fill="#948c6e"/>
<rect x="802" y="104" width="2" height="431" fill="#ffffff"/>
<g>
<clipPath id="cc"><rect x="6" y="106" width="796" height="429"/></clipPath>
<g clip-path="url(#cc)">
<rect x="6" y="106" width="796" height="429" fill="#000"/>
<path d="M41.5 108 V380 M41.5 384 V517" stroke="#7f8fa6" stroke-dasharray="3 3" shape-rendering="crispEdges"/>
<path d="M73.5 108 V380 M73.5 384 V517" stroke="#7f8fa6" stroke-dasharray="3 3" shape-rendering="crispEdges"/>
<path d="M105.5 108 V380 M105.5 384 V517" stroke="#7f8fa6" stroke-dasharray="3 3" shape-rendering="crispEdges"/>
<path d="M137.5 108 V380 M137.5 384 V517" stroke="#7f8fa6" stroke-dasharray="3 3" shape-rendering="crispEdges"/>
<path d="M169.5 108 V380 M169.5 384 V517" stroke="#7f8fa6" stroke-dasharray="3 3" shape-rendering="crispEdges"/>
<path d="M201.5 108 V380 M201.5 384 V517" stroke="#7f8fa6" stroke-dasharray="3 3" shape-rendering="crispEdges"/>
<path d="M233.5 108 V380 M233.5 384 V517" stroke="#7f8fa6" stroke-dasharray="3 3" shape-rendering="crispEdges"/>
<path d="M265.5 108 V380 M265.5 384 V517" stroke="#7f8fa6" stroke-dasharray="3 3" shape-rendering="crispEdges"/>
<path d="M297.5 108 V380 M297.5 384 V517" stroke="#7f8fa6" stroke-dasharray="3 3" shape-rendering="crispEdges"/>
<path d="M329.5 108 V380 M329.5 384 V517" stroke="#7f8fa6" stroke-dasharray="3 3" shape-rendering="crispEdges"/>
<path d="M361.5 108 V380 M361.5 384 V517" stroke="#7f8fa6" stroke-dasharray="3 3" shape-rendering="crispEdges"/>
<path d="M393.5 108 V380 M393.5 384 V517" stroke="#7f8fa6" stroke-dasharray="3 3" shape-rendering="crispEdges"/>
<path d="M425.5 108 V380 M425.5 384 V517" stroke="#7f8fa6" stroke-dasharray="3 3" shape-rendering="crispEdges"/>
<path d="M457.5 108 V380 M457.5 384 V517" stroke="#7f8fa6" stroke-dasharray="3 3" shape-rendering="crispEdges"/>
<path d="M489.5 108 V380 M489.5 384 V517" stroke="#7f8fa6" stroke-dasharray="3 3" shape-rendering="crispEdges"/>
<path d="M521.5 108 V380 M521.5 384 V517" stroke="#7f8fa6" stroke-dasharray="3 3" shape-rendering="crispEdges"/>
<path d="M553.5 108 V380 M553.5 384 V517" stroke="#7f8fa6" stroke-dasharray="3 3" shape-rendering="crispEdges"/>
<path d="M585.5 108 V380 M585.5 384 V517" stroke="#7f8fa6" stroke-dasharray="3 3" shape-rendering="crispEdges"/>
<path d="M617.5 108 V380 M617.5 384 V517" stroke="#7f8fa6" stroke-dasharray="3 3" shape-rendering="crispEdges"/>
<path d="M649.5 108 V380 M649.5 384 V517" stroke="#7f8fa6" stroke-dasharray="3 3" shape-rendering="crispEdges"/>
<path d="M681.5 108 V380 M681.5 384 V517" stroke="#7f8fa6" stroke-dasharray="3 3" shape-rendering="crispEdges"/>
<path d="M713.5 108 V380 M713.5 384 V517" stroke="#7f8fa6" stroke-dasharray="3 3" shape-rendering="crispEdges"/>
<path d="M745.5 108 V380 M745.5 384 V517" stroke="#7f8fa6" stroke-dasharray="3 3" shape-rendering="crispEdges"/>
<path d="M10 124.5 H762" stroke="#7f8fa6" stroke-dasharray="3 3" shape-rendering="crispEdges"/>
<path d="M10 165.5 H762" stroke="#7f8fa6" stroke-dasharray="3 3" shape-rendering="crispEdges"/>
<path d="M10 205.5 H762" stroke="#7f8fa6" stroke-dasharray="3 3" shape-rendering="crispEdges"/>
<path d="M10 245.5 H762" stroke="#7f8fa6" stroke-dasharray="3 3" shape-rendering="crispEdges"/>
<path d="M10 286.5 H762" stroke="#7f8fa6" stroke-dasharray="3 3" shape-rendering="crispEdges"/>
<path d="M10 326.5 H762" stroke="#7f8fa6" stroke-dasharray="3 3" shape-rendering="crispEdges"/>
<path d="M10 367.5 H762" stroke="#7f8fa6" stroke-dasharray="3 3" shape-rendering="crispEdges"/>
<path d="M10 410.5 H762" stroke="#7f8fa6" stroke-dasharray="3 3" shape-rendering="crispEdges"/>
<path d="M10 423.5 H762" stroke="#7f8fa6" stroke-dasharray="3 3" shape-rendering="crispEdges"/>
<path d="M10 477.5 H762" stroke="#7f8fa6" stroke-dasharray="3 3" shape-rendering="crispEdges"/>
<path d="M10 490.5 H762" stroke="#7f8fa6" stroke-dasharray="3 3" shape-rendering="crispEdges"/>
<path d="M10 516.5 H762" stroke="#7f8fa6" stroke-dasharray="3 3" shape-rendering="crispEdges"/>
<path d="M337.5 108 V380 M337.5 384 V517" stroke="#ffffff" stroke-dasharray="3 3" shape-rendering="crispEdges"/>
<path d="M763 124.5 h3" stroke="#fff"/>
<text x="767.43" y="128" font-size="10" font-weight="normal" fill="#fff" textLength="28.27" lengthAdjust="spacingAndGlyphs" xml:space="preserve" stroke="#fff" stroke-width="0.3">1.2825</text>
<path d="M763 165.5 h3" stroke="#fff"/>
<text x="767.43" y="169" font-size="10" font-weight="normal" fill="#fff" textLength="28.27" lengthAdjust="spacingAndGlyphs" xml:space="preserve" stroke="#fff" stroke-width="0.3">1.2810</text>
<path d="M763 205.5 h3" stroke="#fff"/>
<text x="767.43" y="209" font-size="10" font-weight="normal" fill="#fff" textLength="28.27" lengthAdjust="spacingAndGlyphs" xml:space="preserve" stroke="#fff" stroke-width="0.3">1.2795</text>
<path d="M763 245.5 h3" stroke="#fff"/>
<text x="767.43" y="249" font-size="10" font-weight="normal" fill="#fff" textLength="28.27" lengthAdjust="spacingAndGlyphs" xml:space="preserve" stroke="#fff" stroke-width="0.3">1.2780</text>
<path d="M763 286.5 h3" stroke="#fff"/>
<text x="767.43" y="290" font-size="10" font-weight="normal" fill="#fff" textLength="28.27" lengthAdjust="spacingAndGlyphs" xml:space="preserve" stroke="#fff" stroke-width="0.3">1.2765</text>
<path d="M763 326.5 h3" stroke="#fff"/>
<text x="767.43" y="330" font-size="10" font-weight="normal" fill="#fff" textLength="28.27" lengthAdjust="spacingAndGlyphs" xml:space="preserve" stroke="#fff" stroke-width="0.3">1.2750</text>
<path d="M763 367.5 h3" stroke="#fff"/>
<text x="767.43" y="371" font-size="10" font-weight="normal" fill="#fff" textLength="28.27" lengthAdjust="spacingAndGlyphs" xml:space="preserve" stroke="#fff" stroke-width="0.3">1.2735</text>
<text x="766.41" y="393" font-size="10" font-weight="normal" fill="#fff" textLength="13.26" lengthAdjust="spacingAndGlyphs" xml:space="preserve" stroke="#fff" stroke-width="0.3">100</text>
<text x="764.51" y="414" font-size="10" font-weight="normal" fill="#fff" textLength="9.25" lengthAdjust="spacingAndGlyphs" xml:space="preserve" stroke="#fff" stroke-width="0.3">80</text>
<text x="764.51" y="427" font-size="10" font-weight="normal" fill="#fff" textLength="9.25" lengthAdjust="spacingAndGlyphs" xml:space="preserve" stroke="#fff" stroke-width="0.3">70</text>
<text x="764.51" y="481" font-size="10" font-weight="normal" fill="#fff" textLength="9.25" lengthAdjust="spacingAndGlyphs" xml:space="preserve" stroke="#fff" stroke-width="0.3">30</text>
<text x="764.51" y="494" font-size="10" font-weight="normal" fill="#fff" textLength="9.25" lengthAdjust="spacingAndGlyphs" xml:space="preserve" stroke="#fff" stroke-width="0.3">20</text>
<text x="764.57" y="515" font-size="10" font-weight="normal" fill="#fff" textLength="5.21" lengthAdjust="spacingAndGlyphs" xml:space="preserve" stroke="#fff" stroke-width="0.3">0</text>
<path d="M9.5 517 v3" stroke="#fff"/>
<text x="7.42" y="530" font-size="9.6" font-weight="normal" fill="#fff" textLength="55.28" lengthAdjust="spacingAndGlyphs" xml:space="preserve" stroke="#fff" stroke-width="0.3">29 May 2006</text>
<path d="M73.5 517 v3" stroke="#fff"/>
<text x="71.42" y="530" font-size="9.6" font-weight="normal" fill="#fff" textLength="58.28" lengthAdjust="spacingAndGlyphs" xml:space="preserve" stroke="#fff" stroke-width="0.3">29 May 17:45</text>
<path d="M137.5 517 v3" stroke="#fff"/>
<text x="135.42" y="530" font-size="9.6" font-weight="normal" fill="#fff" textLength="58.28" lengthAdjust="spacingAndGlyphs" xml:space="preserve" stroke="#fff" stroke-width="0.3">29 May 19:10</text>
<path d="M201.5 517 v3" stroke="#fff"/>
<text x="199.42" y="530" font-size="9.6" font-weight="normal" fill="#fff" textLength="58.28" lengthAdjust="spacingAndGlyphs" xml:space="preserve" stroke="#fff" stroke-width="0.3">29 May 20:35</text>
<path d="M265.5 517 v3" stroke="#fff"/>
<text x="263.42" y="530" font-size="9.6" font-weight="normal" fill="#fff" textLength="58.28" lengthAdjust="spacingAndGlyphs" xml:space="preserve" stroke="#fff" stroke-width="0.3">29 May 22:25</text>
<path d="M329.5 517 v3" stroke="#fff"/>
<text x="327.42" y="530" font-size="9.6" font-weight="normal" fill="#fff" textLength="58.28" lengthAdjust="spacingAndGlyphs" xml:space="preserve" stroke="#fff" stroke-width="0.3">29 May 23:50</text>
<path d="M393.5 517 v3" stroke="#fff"/>
<text x="391.42" y="530" font-size="9.6" font-weight="normal" fill="#fff" textLength="58.28" lengthAdjust="spacingAndGlyphs" xml:space="preserve" stroke="#fff" stroke-width="0.3">30 May 01:25</text>
<path d="M457.5 517 v3" stroke="#fff"/>
<text x="455.42" y="530" font-size="9.6" font-weight="normal" fill="#fff" textLength="58.28" lengthAdjust="spacingAndGlyphs" xml:space="preserve" stroke="#fff" stroke-width="0.3">30 May 02:45</text>
<path d="M521.5 517 v3" stroke="#fff"/>
<text x="519.42" y="530" font-size="9.6" font-weight="normal" fill="#fff" textLength="58.28" lengthAdjust="spacingAndGlyphs" xml:space="preserve" stroke="#fff" stroke-width="0.3">30 May 04:05</text>
<path d="M585.5 517 v3" stroke="#fff"/>
<text x="583.42" y="530" font-size="9.6" font-weight="normal" fill="#fff" textLength="58.28" lengthAdjust="spacingAndGlyphs" xml:space="preserve" stroke="#fff" stroke-width="0.3">30 May 05:25</text>
<text x="12.42" y="120" font-size="10" font-weight="normal" fill="#fff" textLength="55.69" lengthAdjust="spacingAndGlyphs" xml:space="preserve" stroke="#fff" stroke-width="0.3">EURUSD,M5</text>
<text x="73.79" y="120" font-size="10" font-weight="normal" fill="#fff" textLength="28.49" lengthAdjust="spacingAndGlyphs" xml:space="preserve" stroke="#fff" stroke-width="0.3">1.2808</text>
<text x="104.79" y="120" font-size="10" font-weight="normal" fill="#fff" textLength="27.92" lengthAdjust="spacingAndGlyphs" xml:space="preserve" stroke="#fff" stroke-width="0.3">1.2809</text>
<text x="136.41" y="120" font-size="10" font-weight="normal" fill="#fff" textLength="27.28" lengthAdjust="spacingAndGlyphs" xml:space="preserve" stroke="#fff" stroke-width="0.3">1.2805</text>
<text x="167.19" y="120" font-size="10" font-weight="normal" fill="#fff" textLength="27.51" lengthAdjust="spacingAndGlyphs" xml:space="preserve" stroke="#fff" stroke-width="0.3">1.2805</text>
<path d="M9 169.5 H762" stroke="#ff0000"/>
<path d="M9 177.5 H762" stroke="#8a96a8"/>
<rect x="765" y="163" width="34" height="8" fill="#ff0000"/>
<text x="768.43" y="171.5" font-size="10" font-weight="normal" fill="#000" textLength="27.27" lengthAdjust="spacingAndGlyphs" xml:space="preserve" >1.2808</text>
<rect x="765" y="171" width="34" height="11" fill="#fff"/>
<text x="768.43" y="181" font-size="10" font-weight="normal" fill="#000" textLength="27.27" lengthAdjust="spacingAndGlyphs" xml:space="preserve" >1.2805</text>
<path d="M9.5 312 V317M13.5 311 V317M17.5 312 V316M21.5 313 V321M25.5 313 V318M29.5 317 V325M33.5 315 V322M37.5 313 V323M41.5 318 V336M45.5 331 V346M49.5 321 V337M53.5 321 V324M57.5 325 V346M61.5 336 V340M65.5 334 V336M69.5 336 V343M73.5 344 V354M77.5 345 V357M81.5 358 V368M85.5 358 V364M89.5 352 V367M93.5 363 V371M97.5 361 V365M101.5 351 V361M105.5 344 V353M109.5 344 V348M113.5 347 V349M117.5 345 V353M121.5 342 V346M125.5 328 V351M129.5 325 V340M133.5 336 V344M137.5 334 V346M141.5 344 V351M145.5 340 V343M149.5 336 V344M153.5 335 V341M157.5 334 V338M161.5 334 V338M165.5 334 V336M169.5 323 V336M173.5 322 V330M177.5 323 V333M181.5 317 V325M185.5 319 V325M189.5 320 V327M193.5 307 V320M197.5 317 V325M201.5 317 V325M205.5 317 V322M209.5 313 V316M213.5 318 V325M217.5 312 V319M221.5 315 V322M225.5 317 V324M229.5 316 V322M233.5 317 V322M237.5 319 V330M241.5 318 V330M245.5 322 V331M249.5 325 V345M253.5 334 V345M257.5 328 V335M261.5 328 V335M265.5 320 V332M269.5 325 V334M273.5 328 V337M277.5 331 V335M281.5 317 V330M285.5 317 V329M289.5 320 V331M293.5 322 V328M297.5 323 V326M301.5 310 V327M305.5 306 V312M309.5 312 V319M313.5 312 V323M317.5 325 V327M321.5 324 V338M325.5 328 V343M329.5 326 V332M333.5 328 V336M337.5 330 V338M341.5 335 V338M345.5 328 V332M349.5 320 V326M353.5 310 V318M357.5 308 V318M361.5 317 V319M365.5 320 V322M369.5 320 V329M373.5 317 V332M377.5 323 V331M381.5 320 V327M385.5 321 V330M389.5 328 V338M393.5 326 V336M397.5 317 V325M401.5 317 V321M405.5 317 V327M409.5 323 V331M413.5 328 V337M417.5 331 V344M421.5 331 V336M425.5 327 V349M429.5 334 V344M433.5 317 V333M437.5 315 V325M441.5 309 V319M445.5 313 V319M449.5 312 V319M453.5 315 V325M457.5 317 V322M461.5 317 V322M465.5 317 V324M469.5 312 V319M473.5 309 V317M477.5 318 V320M481.5 312 V317M485.5 313 V316M489.5 309 V314M493.5 309 V317M497.5 305 V311M501.5 297 V306M505.5 290 V298M509.5 282 V298M513.5 282 V288M517.5 269 V283M521.5 275 V285M525.5 271 V279M529.5 263 V273M533.5 265 V287M537.5 266 V279M541.5 265 V279M545.5 243 V267M549.5 235 V260M553.5 184 V244M557.5 169 V221M561.5 174 V184M565.5 145 V189M569.5 155 V176M573.5 139 V170M577.5 145 V189M581.5 162 V190M585.5 152 V184M589.5 136 V170M593.5 139 V173M597.5 161 V176M601.5 150 V167M605.5 166 V175M609.5 177 V186M613.5 166 V186M617.5 163 V177M621.5 166 V178" stroke="#00ff00" stroke-width="1"/>
<rect x="8.5" y="313.5" width="2" height="2" fill="#000" stroke="#00ff00" shape-rendering="crispEdges"/>
<rect x="12.5" y="312.5" width="2" height="2" fill="#000" stroke="#00ff00" shape-rendering="crispEdges"/>
<rect x="16.5" y="313.5" width="2" height="1" fill="#fff" stroke="#00ff00" shape-rendering="crispEdges"/>
<rect x="20.5" y="314.5" width="2" height="5" fill="#fff" stroke="#00ff00" shape-rendering="crispEdges"/>
<rect x="24.5" y="314.5" width="2" height="1" fill="#fff" stroke="#00ff00" shape-rendering="crispEdges"/>
<rect x="28.5" y="318.5" width="2" height="4" fill="#000" stroke="#00ff00" shape-rendering="crispEdges"/>
<rect x="32.5" y="316.5" width="2" height="3" fill="#000" stroke="#00ff00" shape-rendering="crispEdges"/>
<rect x="36.5" y="314.5" width="2" height="5" fill="#fff" stroke="#00ff00" shape-rendering="crispEdges"/>
<rect x="40.5" y="319.5" width="2" height="14" fill="#fff" stroke="#00ff00" shape-rendering="crispEdges"/>
<rect x="44.5" y="335.5" width="2" height="8" fill="#000" stroke="#00ff00" shape-rendering="crispEdges"/>
<rect x="48.5" y="324.5" width="2" height="9" fill="#000" stroke="#00ff00" shape-rendering="crispEdges"/>
<rect x="52" y="321" width="3" height="1" fill="#00ff00"/>
<rect x="56.5" y="326.5" width="2" height="17" fill="#fff" stroke="#00ff00" shape-rendering="crispEdges"/>
<rect x="60.5" y="337.5" width="2" height="1" fill="#fff" stroke="#00ff00" shape-rendering="crispEdges"/>
<rect x="64" y="334" width="3" height="1" fill="#00ff00"/>
<rect x="68.5" y="337.5" width="2" height="3" fill="#fff" stroke="#00ff00" shape-rendering="crispEdges"/>
<rect x="72.5" y="346.5" width="2" height="4" fill="#fff" stroke="#00ff00" shape-rendering="crispEdges"/>
<rect x="76.5" y="347.5" width="2" height="6" fill="#000" stroke="#00ff00" shape-rendering="crispEdges"/>
<rect x="80.5" y="360.5" width="2" height="5" fill="#000" stroke="#00ff00" shape-rendering="crispEdges"/>
<rect x="84.5" y="359.5" width="2" height="2" fill="#000" stroke="#00ff00" shape-rendering="crispEdges"/>
<rect x="88.5" y="353.5" width="2" height="10" fill="#fff" stroke="#00ff00" shape-rendering="crispEdges"/>
<rect x="92.5" y="365.5" width="2" height="2" fill="#000" stroke="#00ff00" shape-rendering="crispEdges"/>
<rect x="96.5" y="362.5" width="2" height="1" fill="#000" stroke="#00ff00" shape-rendering="crispEdges"/>
<rect x="100.5" y="353.5" width="2" height="4" fill="#000" stroke="#00ff00" shape-rendering="crispEdges"/>
<rect x="104.5" y="346.5" width="2" height="3" fill="#000" stroke="#00ff00" shape-rendering="crispEdges"/>
<rect x="108.5" y="345.5" width="2" height="1" fill="#000" stroke="#00ff00" shape-rendering="crispEdges"/>
<rect x="112" y="347" width="3" height="1" fill="#00ff00"/>
<rect x="116.5" y="346.5" width="2" height="3" fill="#000" stroke="#00ff00" shape-rendering="crispEdges"/>
<rect x="120.5" y="343.5" width="2" height="1" fill="#000" stroke="#00ff00" shape-rendering="crispEdges"/>
<rect x="124.5" y="329.5" width="2" height="16" fill="#fff" stroke="#00ff00" shape-rendering="crispEdges"/>
<rect x="128.5" y="326.5" width="2" height="11" fill="#000" stroke="#00ff00" shape-rendering="crispEdges"/>
<rect x="132.5" y="337.5" width="2" height="4" fill="#000" stroke="#00ff00" shape-rendering="crispEdges"/>
<rect x="136.5" y="337.5" width="2" height="6" fill="#000" stroke="#00ff00" shape-rendering="crispEdges"/>
<rect x="140.5" y="345.5" width="2" height="2" fill="#000" stroke="#00ff00" shape-rendering="crispEdges"/>
<rect x="144" y="340" width="3" height="1" fill="#00ff00"/>
<rect x="148.5" y="338.5" width="2" height="3" fill="#000" stroke="#00ff00" shape-rendering="crispEdges"/>
<rect x="152.5" y="336.5" width="2" height="2" fill="#000" stroke="#00ff00" shape-rendering="crispEdges"/>
<rect x="156.5" y="335.5" width="2" height="1" fill="#fff" stroke="#00ff00" shape-rendering="crispEdges"/>
<rect x="160.5" y="335.5" width="2" height="1" fill="#000" stroke="#00ff00" shape-rendering="crispEdges"/>
<rect x="164" y="334" width="3" height="1" fill="#00ff00"/>
<rect x="168.5" y="324.5" width="2" height="9" fill="#000" stroke="#00ff00" shape-rendering="crispEdges"/>
<rect x="172.5" y="323.5" width="2" height="4" fill="#000" stroke="#00ff00" shape-rendering="crispEdges"/>
<rect x="176.5" y="325.5" width="2" height="4" fill="#000" stroke="#00ff00" shape-rendering="crispEdges"/>
<rect x="180.5" y="319.5" width="2" height="4" fill="#000" stroke="#00ff00" shape-rendering="crispEdges"/>
<rect x="184.5" y="320.5" width="2" height="2" fill="#000" stroke="#00ff00" shape-rendering="crispEdges"/>
<rect x="188.5" y="321.5" width="2" height="3" fill="#fff" stroke="#00ff00" shape-rendering="crispEdges"/>
<rect x="192.5" y="310.5" width="2" height="7" fill="#fff" stroke="#00ff00" shape-rendering="crispEdges"/>
<rect x="196.5" y="318.5" width="2" height="4" fill="#fff" stroke="#00ff00" shape-rendering="crispEdges"/>
<rect x="200.5" y="318.5" width="2" height="5" fill="#fff" stroke="#00ff00" shape-rendering="crispEdges"/>
<rect x="204.5" y="318.5" width="2" height="1" fill="#fff" stroke="#00ff00" shape-rendering="crispEdges"/>
<rect x="208" y="313" width="3" height="1" fill="#00ff00"/>
<rect x="212.5" y="320.5" width="2" height="2" fill="#fff" stroke="#00ff00" shape-rendering="crispEdges"/>
<rect x="216.5" y="313.5" width="2" height="3" fill="#000" stroke="#00ff00" shape-rendering="crispEdges"/>
<rect x="220.5" y="316.5" width="2" height="2" fill="#000" stroke="#00ff00" shape-rendering="crispEdges"/>
<rect x="224.5" y="318.5" width="2" height="3" fill="#fff" stroke="#00ff00" shape-rendering="crispEdges"/>
<rect x="228.5" y="317.5" width="2" height="2" fill="#fff" stroke="#00ff00" shape-rendering="crispEdges"/>
<rect x="232.5" y="318.5" width="2" height="2" fill="#fff" stroke="#00ff00" shape-rendering="crispEdges"/>
<rect x="236.5" y="322.5" width="2" height="4" fill="#fff" stroke="#00ff00" shape-rendering="crispEdges"/>
<rect x="240.5" y="320.5" width="2" height="7" fill="#000" stroke="#00ff00" shape-rendering="crispEdges"/>
<rect x="244.5" y="324.5" width="2" height="3" fill="#000" stroke="#00ff00" shape-rendering="crispEdges"/>
<rect x="248.5" y="327.5" width="2" height="13" fill="#fff" stroke="#00ff00" shape-rendering="crispEdges"/>
<rect x="252.5" y="336.5" width="2" height="5" fill="#000" stroke="#00ff00" shape-rendering="crispEdges"/>
<rect x="256.5" y="329.5" width="2" height="3" fill="#000" stroke="#00ff00" shape-rendering="crispEdges"/>
<rect x="260.5" y="330.5" width="2" height="1" fill="#000" stroke="#00ff00" shape-rendering="crispEdges"/>
<rect x="264.5" y="323.5" width="2" height="4" fill="#fff" stroke="#00ff00" shape-rendering="crispEdges"/>
<rect x="268.5" y="326.5" width="2" height="5" fill="#fff" stroke="#00ff00" shape-rendering="crispEdges"/>
<rect x="272.5" y="329.5" width="2" height="5" fill="#fff" stroke="#00ff00" shape-rendering="crispEdges"/>
<rect x="276.5" y="332.5" width="2" height="1" fill="#000" stroke="#00ff00" shape-rendering="crispEdges"/>
<rect x="280.5" y="320.5" width="2" height="4" fill="#000" stroke="#00ff00" shape-rendering="crispEdges"/>
<rect x="284.5" y="319.5" width="2" height="7" fill="#fff" stroke="#00ff00" shape-rendering="crispEdges"/>
<rect x="288.5" y="321.5" width="2" height="7" fill="#000" stroke="#00ff00" shape-rendering="crispEdges"/>
<rect x="292.5" y="323.5" width="2" height="2" fill="#000" stroke="#00ff00" shape-rendering="crispEdges"/>
<rect x="296" y="323" width="3" height="1" fill="#00ff00"/>
<rect x="300.5" y="313.5" width="2" height="8" fill="#fff" stroke="#00ff00" shape-rendering="crispEdges"/>
<rect x="304.5" y="307.5" width="2" height="2" fill="#000" stroke="#00ff00" shape-rendering="crispEdges"/>
<rect x="308.5" y="313.5" width="2" height="3" fill="#fff" stroke="#00ff00" shape-rendering="crispEdges"/>
<rect x="312.5" y="314.5" width="2" height="6" fill="#000" stroke="#00ff00" shape-rendering="crispEdges"/>
<rect x="316" y="325" width="3" height="1" fill="#00ff00"/>
<rect x="320.5" y="328.5" width="2" height="6" fill="#000" stroke="#00ff00" shape-rendering="crispEdges"/>
<rect x="324.5" y="332.5" width="2" height="6" fill="#fff" stroke="#00ff00" shape-rendering="crispEdges"/>
<rect x="328.5" y="327.5" width="2" height="3" fill="#000" stroke="#00ff00" shape-rendering="crispEdges"/>
<rect x="332.5" y="330.5" width="2" height="3" fill="#000" stroke="#00ff00" shape-rendering="crispEdges"/>
<rect x="336.5" y="332.5" width="2" height="2" fill="#000" stroke="#00ff00" shape-rendering="crispEdges"/>
<rect x="340" y="335" width="3" height="1" fill="#00ff00"/>
<rect x="344.5" y="329.5" width="2" height="1" fill="#fff" stroke="#00ff00" shape-rendering="crispEdges"/>
<rect x="348.5" y="321.5" width="2" height="2" fill="#000" stroke="#00ff00" shape-rendering="crispEdges"/>
<rect x="352.5" y="312.5" width="2" height="3" fill="#000" stroke="#00ff00" shape-rendering="crispEdges"/>
<rect x="356.5" y="310.5" width="2" height="5" fill="#fff" stroke="#00ff00" shape-rendering="crispEdges"/>
<rect x="360" y="317" width="3" height="1" fill="#00ff00"/>
<rect x="364" y="320" width="3" height="1" fill="#00ff00"/>
<rect x="368.5" y="321.5" width="2" height="5" fill="#000" stroke="#00ff00" shape-rendering="crispEdges"/>
<rect x="372.5" y="319.5" width="2" height="9" fill="#fff" stroke="#00ff00" shape-rendering="crispEdges"/>
<rect x="376.5" y="325.5" width="2" height="3" fill="#000" stroke="#00ff00" shape-rendering="crispEdges"/>
<rect x="380.5" y="321.5" width="2" height="2" fill="#000" stroke="#00ff00" shape-rendering="crispEdges"/>
<rect x="384.5" y="323.5" width="2" height="4" fill="#000" stroke="#00ff00" shape-rendering="crispEdges"/>
<rect x="388.5" y="330.5" width="2" height="6" fill="#000" stroke="#00ff00" shape-rendering="crispEdges"/>
<rect x="392.5" y="327.5" width="2" height="7" fill="#000" stroke="#00ff00" shape-rendering="crispEdges"/>
<rect x="396.5" y="318.5" width="2" height="4" fill="#000" stroke="#00ff00" shape-rendering="crispEdges"/>
<rect x="400.5" y="318.5" width="2" height="1" fill="#000" stroke="#00ff00" shape-rendering="crispEdges"/>
<rect x="404.5" y="319.5" width="2" height="4" fill="#fff" stroke="#00ff00" shape-rendering="crispEdges"/>
<rect x="408.5" y="324.5" width="2" height="4" fill="#fff" stroke="#00ff00" shape-rendering="crispEdges"/>
<rect x="412.5" y="330.5" width="2" height="4" fill="#000" stroke="#00ff00" shape-rendering="crispEdges"/>
<rect x="416.5" y="334.5" width="2" height="5" fill="#000" stroke="#00ff00" shape-rendering="crispEdges"/>
<rect x="420.5" y="332.5" width="2" height="1" fill="#000" stroke="#00ff00" shape-rendering="crispEdges"/>
<rect x="424.5" y="332.5" width="2" height="12" fill="#000" stroke="#00ff00" shape-rendering="crispEdges"/>
<rect x="428.5" y="336.5" width="2" height="3" fill="#000" stroke="#00ff00" shape-rendering="crispEdges"/>
<rect x="432.5" y="321.5" width="2" height="6" fill="#fff" stroke="#00ff00" shape-rendering="crispEdges"/>
<rect x="436.5" y="317.5" width="2" height="3" fill="#000" stroke="#00ff00" shape-rendering="crispEdges"/>
<rect x="440.5" y="310.5" width="2" height="6" fill="#000" stroke="#00ff00" shape-rendering="crispEdges"/>
<rect x="444.5" y="314.5" width="2" height="2" fill="#fff" stroke="#00ff00" shape-rendering="crispEdges"/>
<rect x="448.5" y="313.5" width="2" height="3" fill="#000" stroke="#00ff00" shape-rendering="crispEdges"/>
<rect x="452.5" y="316.5" width="2" height="5" fill="#000" stroke="#00ff00" shape-rendering="crispEdges"/>
<rect x="456.5" y="318.5" width="2" height="1" fill="#000" stroke="#00ff00" shape-rendering="crispEdges"/>
<rect x="460.5" y="318.5" width="2" height="1" fill="#000" stroke="#00ff00" shape-rendering="crispEdges"/>
<rect x="464.5" y="318.5" width="2" height="2" fill="#000" stroke="#00ff00" shape-rendering="crispEdges"/>
<rect x="468.5" y="313.5" width="2" height="3" fill="#000" stroke="#00ff00" shape-rendering="crispEdges"/>
<rect x="472.5" y="310.5" width="2" height="4" fill="#fff" stroke="#00ff00" shape-rendering="crispEdges"/>
<rect x="476" y="318" width="3" height="1" fill="#00ff00"/>
<rect x="480.5" y="313.5" width="2" height="2" fill="#000" stroke="#00ff00" shape-rendering="crispEdges"/>
<rect x="484" y="313" width="3" height="1" fill="#00ff00"/>
<rect x="488.5" y="310.5" width="2" height="2" fill="#fff" stroke="#00ff00" shape-rendering="crispEdges"/>
<rect x="492.5" y="310.5" width="2" height="4" fill="#fff" stroke="#00ff00" shape-rendering="crispEdges"/>
<rect x="496.5" y="307.5" width="2" height="2" fill="#000" stroke="#00ff00" shape-rendering="crispEdges"/>
<rect x="500.5" y="297.5" width="2" height="6" fill="#000" stroke="#00ff00" shape-rendering="crispEdges"/>
<rect x="504.5" y="292.5" width="2" height="2" fill="#000" stroke="#00ff00" shape-rendering="crispEdges"/>
<rect x="508.5" y="285.5" width="2" height="9" fill="#000" stroke="#00ff00" shape-rendering="crispEdges"/>
<rect x="512.5" y="283.5" width="2" height="5" fill="#000" stroke="#00ff00" shape-rendering="crispEdges"/>
<rect x="516.5" y="275.5" width="2" height="5" fill="#000" stroke="#00ff00" shape-rendering="crispEdges"/>
<rect x="520.5" y="276.5" width="2" height="6" fill="#fff" stroke="#00ff00" shape-rendering="crispEdges"/>
<rect x="524.5" y="274.5" width="2" height="2" fill="#000" stroke="#00ff00" shape-rendering="crispEdges"/>
<rect x="528.5" y="269.5" width="2" height="2" fill="#000" stroke="#00ff00" shape-rendering="crispEdges"/>
<rect x="532.5" y="269.5" width="2" height="2" fill="#000" stroke="#00ff00" shape-rendering="crispEdges"/>
<rect x="536.5" y="266.5" width="2" height="4" fill="#fff" stroke="#00ff00" shape-rendering="crispEdges"/>
<rect x="540.5" y="270.5" width="2" height="3" fill="#000" stroke="#00ff00" shape-rendering="crispEdges"/>
<rect x="544.5" y="244.5" width="2" height="21" fill="#000" stroke="#00ff00" shape-rendering="crispEdges"/>
<rect x="548.5" y="245.5" width="2" height="7" fill="#fff" stroke="#00ff00" shape-rendering="crispEdges"/>
<rect x="552.5" y="220.5" width="2" height="19" fill="#000" stroke="#00ff00" shape-rendering="crispEdges"/>
<rect x="556.5" y="172.5" width="2" height="47" fill="#000" stroke="#00ff00" shape-rendering="crispEdges"/>
<rect x="560.5" y="174.5" width="2" height="7" fill="#fff" stroke="#00ff00" shape-rendering="crispEdges"/>
<rect x="564.5" y="166.5" width="2" height="21" fill="#000" stroke="#00ff00" shape-rendering="crispEdges"/>
<rect x="568.5" y="162.5" width="2" height="5" fill="#000" stroke="#00ff00" shape-rendering="crispEdges"/>
<rect x="572.5" y="145.5" width="2" height="20" fill="#000" stroke="#00ff00" shape-rendering="crispEdges"/>
<rect x="576.5" y="144.5" width="2" height="43" fill="#fff" stroke="#00ff00" shape-rendering="crispEdges"/>
<rect x="580.5" y="182.5" width="2" height="2" fill="#000" stroke="#00ff00" shape-rendering="crispEdges"/>
<rect x="584.5" y="158.5" width="2" height="22" fill="#000" stroke="#00ff00" shape-rendering="crispEdges"/>
<rect x="588.5" y="139.5" width="2" height="15" fill="#000" stroke="#00ff00" shape-rendering="crispEdges"/>
<rect x="592.5" y="145.5" width="2" height="26" fill="#fff" stroke="#00ff00" shape-rendering="crispEdges"/>
<rect x="596.5" y="163.5" width="2" height="10" fill="#000" stroke="#00ff00" shape-rendering="crispEdges"/>
<rect x="600.5" y="161.5" width="2" height="1" fill="#000" stroke="#00ff00" shape-rendering="crispEdges"/>
<rect x="604.5" y="166.5" width="2" height="7" fill="#fff" stroke="#00ff00" shape-rendering="crispEdges"/>
<rect x="608.5" y="180.5" width="2" height="2" fill="#000" stroke="#00ff00" shape-rendering="crispEdges"/>
<rect x="612.5" y="169.5" width="2" height="11" fill="#000" stroke="#00ff00" shape-rendering="crispEdges"/>
<rect x="616.5" y="167.5" width="2" height="4" fill="#000" stroke="#00ff00" shape-rendering="crispEdges"/>
<rect x="620.5" y="169.5" width="2" height="6" fill="#fff" stroke="#00ff00" shape-rendering="crispEdges"/>
<polyline points="8.0,296.5 17.0,300.3 26.0,302.0 34.0,303.7 41.0,302.0 45.0,300.6 55.0,301.5 65.0,300.3 74.0,299.8 79.0,297.5 88.0,297.2 96.0,299.0 100.0,301.5 110.0,311.0 120.6,319.5 129.0,320.4 137.0,325.5 145.0,327.2 151.5,327.2 160.0,325.0 168.7,321.2 177.0,319.5 186.0,317.0 194.5,313.5 200.0,312.6 210.0,309.0 219.0,306.6 230.0,308.0 241.0,311.0 251.5,310.0 263.6,308.3 279.0,310.0 291.0,311.8 300.0,312.6 313.7,309.2 329.0,311.8 341.0,311.3 351.5,308.3 358.4,306.6 380.8,306.6 389.3,311.3 400.0,311.8 413.7,310.7 425.8,310.7 436.0,311.5 444.7,311.5 458.4,309.8 468.7,307.8 479.0,306.4 491.0,305.0 496.2,303.8 500.0,301.2 514.4,290.0 524.0,278.0 531.3,265.0 541.0,257.7 547.0,246.8 550.4,238.3 554.0,225.0 558.9,205.8 566.0,181.8 572.0,157.7 578.0,143.3 585.3,128.9 588.9,120.8 598.6,111.5 601.5,110.3 605.2,110.3 609.5,110.0 613.4,110.8 617.9,113.4 621.2,118.2" fill="none" stroke="#87cefa" stroke-width="2" stroke-linejoin="round" shape-rendering="crispEdges"/>
<polyline points="8.0,310.0 17.0,310.0 26.0,311.8 34.4,312.6 43.0,314.4 51.5,315.2 60.0,317.8 68.7,321.2 74.0,323.0 82.5,326.4 91.0,331.5 100.0,336.5 110.3,342.7 120.6,346.2 134.4,347.0 148.0,347.9 158.4,347.0 168.7,343.6 177.3,340.0 186.0,336.7 200.0,330.7 217.0,326.4 230.0,322.0 239.5,320.4 250.0,321.0 269.0,322.0 286.0,323.8 300.0,324.3 306.9,324.3 313.7,322.6 320.6,324.3 334.4,326.4 351.5,325.0 361.9,323.0 372.0,322.6 386.0,325.0 400.0,326.2 413.7,325.6 431.0,326.2 444.7,326.2 458.4,325.0 468.7,322.2 479.0,321.0 491.0,319.8 500.0,317.6 514.4,311.8 528.9,305.8 541.0,299.8 551.7,290.0 560.0,278.0 569.8,261.3 579.4,242.0 592.5,220.0 602.2,205.8 611.8,192.6 621.4,183.0" fill="none" stroke="#87cefa" stroke-width="2" stroke-linejoin="round" shape-rendering="crispEdges"/>
<polyline points="8.0,320.4 17.0,321.0 26.0,321.2 36.0,323.0 41.0,326.4 44.7,329.8 53.0,330.7 60.0,338.4 68.7,341.9 75.6,350.4 82.5,359.0 91.0,369.3 100.0,374.3 117.0,373.6 125.8,371.0 137.8,368.5 160.0,368.5 168.7,365.0 182.5,353.9 194.5,351.3 200.0,349.6 220.6,345.3 234.0,336.7 244.7,330.7 251.5,330.7 265.0,333.0 281.0,335.0 300.0,336.2 306.9,337.6 317.2,339.8 334.4,339.3 349.8,341.0 361.9,340.1 400.0,340.1 413.7,339.0 431.0,339.0 444.7,339.9 458.4,339.4 473.9,336.5 486.0,335.6 500.0,334.4 507.2,333.9 514.4,334.6 524.0,337.0 536.0,337.8 543.3,335.1 550.5,335.1 554.1,339.5 557.7,346.7 565.0,350.3 573.4,349.0 581.8,335.8 590.2,327.4 598.6,311.8 608.3,287.7 615.5,266.0 621.5,249.2" fill="none" stroke="#87cefa" stroke-width="2" stroke-linejoin="round" shape-rendering="crispEdges"/>
<circle cx="20.7" cy="310.7" r="3.2" fill="#ff00ff"/>
<polyline points="24.0,311.3 38.0,311.3 40.0,319.5 55.0,319.7 56.0,321.0 69.0,321.0 72.4,327.0 80.0,331.4 85.0,331.4 86.9,335.0 92.4,342.5 101.0,343.0" fill="none" stroke="#ff00ff" stroke-width="1"/>
<rect x="22" y="310" width="3" height="3" fill="#ff00ff"/>
<rect x="26" y="310" width="3" height="3" fill="#ff00ff"/>
<rect x="30" y="310" width="3" height="3" fill="#ff00ff"/>
<rect x="34" y="310" width="3" height="3" fill="#ff00ff"/>
<rect x="38" y="318" width="3" height="3" fill="#ff00ff"/>
<rect x="42" y="318" width="3" height="3" fill="#ff00ff"/>
<rect x="46" y="318" width="3" height="3" fill="#ff00ff"/>
<rect x="50" y="318" width="3" height="3" fill="#ff00ff"/>
<rect x="54" y="320" width="3" height="3" fill="#ff00ff"/>
<rect x="58" y="320" width="3" height="3" fill="#ff00ff"/>
<rect x="62" y="320" width="3" height="3" fill="#ff00ff"/>
<rect x="66" y="320" width="3" height="3" fill="#ff00ff"/>
<rect x="70" y="325" width="3" height="3" fill="#ff00ff"/>
<rect x="74" y="328" width="3" height="3" fill="#ff00ff"/>
<rect x="78" y="330" width="3" height="3" fill="#ff00ff"/>
<rect x="82" y="330" width="3" height="3" fill="#ff00ff"/>
<rect x="86" y="335" width="3" height="3" fill="#ff00ff"/>
<rect x="90" y="340" width="3" height="3" fill="#ff00ff"/>
<rect x="94" y="341" width="3" height="3" fill="#ff00ff"/>
<rect x="98" y="341" width="3" height="3" fill="#ff00ff"/>
<circle cx="140.4" cy="332.4" r="3.2" fill="#ff00ff"/>
<polyline points="144.0,333.3 162.0,333.3 164.6,337.0" fill="none" stroke="#ff00ff" stroke-width="1"/>
<rect x="142" y="332" width="3" height="3" fill="#ff00ff"/>
<rect x="146" y="332" width="3" height="3" fill="#ff00ff"/>
<rect x="150" y="332" width="3" height="3" fill="#ff00ff"/>
<rect x="154" y="332" width="3" height="3" fill="#ff00ff"/>
<rect x="158" y="332" width="3" height="3" fill="#ff00ff"/>
<rect x="162" y="335" width="3" height="3" fill="#ff00ff"/>
<circle cx="221" cy="310.6" r="3.2" fill="#ff00ff"/>
<polyline points="224.0,311.3 229.0,315.5 245.0,315.7 248.0,321.0 252.0,323.7 274.0,323.7 277.0,326.4" fill="none" stroke="#ff00ff" stroke-width="1"/>
<rect x="222" y="310" width="3" height="3" fill="#ff00ff"/>
<rect x="226" y="313" width="3" height="3" fill="#ff00ff"/>
<rect x="230" y="314" width="3" height="3" fill="#ff00ff"/>
<rect x="234" y="314" width="3" height="3" fill="#ff00ff"/>
<rect x="238" y="314" width="3" height="3" fill="#ff00ff"/>
<rect x="242" y="314" width="3" height="3" fill="#ff00ff"/>
<rect x="246" y="320" width="3" height="3" fill="#ff00ff"/>
<rect x="250" y="322" width="3" height="3" fill="#ff00ff"/>
<rect x="254" y="322" width="3" height="3" fill="#ff00ff"/>
<rect x="258" y="322" width="3" height="3" fill="#ff00ff"/>
<rect x="262" y="322" width="3" height="3" fill="#ff00ff"/>
<rect x="266" y="322" width="3" height="3" fill="#ff00ff"/>
<rect x="270" y="322" width="3" height="3" fill="#ff00ff"/>
<rect x="274" y="324" width="3" height="3" fill="#ff00ff"/>
<circle cx="316.8" cy="311.8" r="3.2" fill="#ff00ff"/>
<polyline points="320.0,316.0 337.0,316.0 339.0,320.4 345.0,320.4" fill="none" stroke="#ff00ff" stroke-width="1"/>
<rect x="318" y="314" width="3" height="3" fill="#ff00ff"/>
<rect x="322" y="314" width="3" height="3" fill="#ff00ff"/>
<rect x="326" y="314" width="3" height="3" fill="#ff00ff"/>
<rect x="330" y="314" width="3" height="3" fill="#ff00ff"/>
<rect x="334" y="314" width="3" height="3" fill="#ff00ff"/>
<rect x="338" y="319" width="3" height="3" fill="#ff00ff"/>
<rect x="342" y="319" width="3" height="3" fill="#ff00ff"/>
<circle cx="380.4" cy="312.6" r="3.2" fill="#ff00ff"/>
<polyline points="385.5,312.7 388.2,315.4 392.4,322.3" fill="none" stroke="#ff00ff" stroke-width="1"/>
<rect x="384" y="311" width="3" height="3" fill="#ff00ff"/>
<rect x="388" y="316" width="3" height="3" fill="#ff00ff"/>
<circle cx="413" cy="321.4" r="3.2" fill="#ff00ff"/>
<polyline points="417.0,324.4 424.0,325.5 430.0,325.5" fill="none" stroke="#ff00ff" stroke-width="1"/>
<rect x="416" y="323" width="3" height="3" fill="#ff00ff"/>
<rect x="420" y="324" width="3" height="3" fill="#ff00ff"/>
<rect x="424" y="324" width="3" height="3" fill="#ff00ff"/>
<rect x="428" y="324" width="3" height="3" fill="#ff00ff"/>
<circle cx="604.6" cy="150.5" r="3.2" fill="#ff00ff"/>
<polyline points="609.0,151.0 621.0,151.0" fill="none" stroke="#ff00ff" stroke-width="1"/>
<rect x="608" y="150" width="3" height="3" fill="#ff00ff"/>
<rect x="612" y="150" width="3" height="3" fill="#ff00ff"/>
<rect x="616" y="150" width="3" height="3" fill="#ff00ff"/>
<rect x="620" y="150" width="3" height="3" fill="#ff00ff"/>
<polyline points="9.0,317.0 18.0,317.0" fill="none" stroke="#00ffff" stroke-width="1"/>
<rect x="8" y="316" width="3" height="3" fill="#00ffff"/>
<rect x="12" y="316" width="3" height="3" fill="#00ffff"/>
<rect x="16" y="316" width="3" height="3" fill="#00ffff"/>
<circle cx="104.5" cy="357.5" r="3.2" fill="#00ffff"/>
<polyline points="107.5,358.2 121.2,358.2 124.7,356.4 128.0,351.6 133.0,348.9 136.4,343.4" fill="none" stroke="#00ffff" stroke-width="1"/>
<rect x="106" y="357" width="3" height="3" fill="#00ffff"/>
<rect x="110" y="357" width="3" height="3" fill="#00ffff"/>
<rect x="114" y="357" width="3" height="3" fill="#00ffff"/>
<rect x="118" y="357" width="3" height="3" fill="#00ffff"/>
<rect x="122" y="356" width="3" height="3" fill="#00ffff"/>
<rect x="126" y="351" width="3" height="3" fill="#00ffff"/>
<rect x="130" y="348" width="3" height="3" fill="#00ffff"/>
<rect x="134" y="343" width="3" height="3" fill="#00ffff"/>
<circle cx="168.7" cy="340.5" r="3.2" fill="#00ffff"/>
<polyline points="176.3,334.7 180.4,333.3 183.9,330.5 188.0,329.9 192.0,326.4 197.0,324.4 201.0,323.7 208.0,323.0 212.7,318.9 217.0,318.9" fill="none" stroke="#00ffff" stroke-width="1"/>
<rect x="175" y="333" width="3" height="3" fill="#00ffff"/>
<rect x="179" y="332" width="3" height="3" fill="#00ffff"/>
<rect x="183" y="329" width="3" height="3" fill="#00ffff"/>
<rect x="187" y="328" width="3" height="3" fill="#00ffff"/>
<rect x="191" y="325" width="3" height="3" fill="#00ffff"/>
<rect x="195" y="323" width="3" height="3" fill="#00ffff"/>
<rect x="199" y="322" width="3" height="3" fill="#00ffff"/>
<rect x="203" y="322" width="3" height="3" fill="#00ffff"/>
<rect x="207" y="321" width="3" height="3" fill="#00ffff"/>
<rect x="211" y="318" width="3" height="3" fill="#00ffff"/>
<rect x="215" y="317" width="3" height="3" fill="#00ffff"/>
<circle cx="281" cy="334.6" r="3.2" fill="#00ffff"/>
<polyline points="287.7,330.5 297.0,330.5 301.5,327.1 305.6,325.7 309.0,323.7 312.0,322.3" fill="none" stroke="#00ffff" stroke-width="1"/>
<rect x="286" y="329" width="3" height="3" fill="#00ffff"/>
<rect x="290" y="329" width="3" height="3" fill="#00ffff"/>
<rect x="294" y="329" width="3" height="3" fill="#00ffff"/>
<rect x="298" y="327" width="3" height="3" fill="#00ffff"/>
<rect x="302" y="325" width="3" height="3" fill="#00ffff"/>
<rect x="306" y="323" width="3" height="3" fill="#00ffff"/>
<rect x="310" y="321" width="3" height="3" fill="#00ffff"/>
<circle cx="349" cy="331.8" r="3.2" fill="#00ffff"/>
<polyline points="353.0,330.5 357.2,329.9 360.7,327.8 374.0,327.8 376.5,323.7" fill="none" stroke="#00ffff" stroke-width="1"/>
<rect x="352" y="329" width="3" height="3" fill="#00ffff"/>
<rect x="356" y="328" width="3" height="3" fill="#00ffff"/>
<rect x="360" y="326" width="3" height="3" fill="#00ffff"/>
<rect x="364" y="326" width="3" height="3" fill="#00ffff"/>
<rect x="368" y="326" width="3" height="3" fill="#00ffff"/>
<rect x="372" y="326" width="3" height="3" fill="#00ffff"/>
<circle cx="396.5" cy="329.9" r="3.2" fill="#00ffff"/>
<polyline points="400.6,330.5 409.0,330.5" fill="none" stroke="#00ffff" stroke-width="1"/>
<rect x="399" y="329" width="3" height="3" fill="#00ffff"/>
<rect x="403" y="329" width="3" height="3" fill="#00ffff"/>
<rect x="407" y="329" width="3" height="3" fill="#00ffff"/>
<circle cx="432.6" cy="336.5" r="3.2" fill="#00ffff"/>
<polyline points="440.0,335.3 458.0,335.3 465.0,325.0 468.7,320.8 485.0,320.8 488.7,318.0 493.0,318.0 496.2,316.7 500.4,312.5 504.5,310.5 508.6,308.4 512.7,305.7 516.2,300.2 524.4,300.2 528.5,295.4 532.7,291.2 539.4,285.0 547.9,269.5 552.7,253.8 559.9,249.0 568.3,237.0 573.1,234.6 576.7,228.6 581.0,218.0 584.8,212.0 588.7,194.0 592.5,179.5 597.2,171.7 602.0,171.7" fill="none" stroke="#00ffff" stroke-width="1"/>
<rect x="438" y="334" width="3" height="3" fill="#00ffff"/>
<rect x="442" y="334" width="3" height="3" fill="#00ffff"/>
<rect x="446" y="334" width="3" height="3" fill="#00ffff"/>
<rect x="450" y="334" width="3" height="3" fill="#00ffff"/>
<rect x="454" y="334" width="3" height="3" fill="#00ffff"/>
<rect x="458" y="331" width="3" height="3" fill="#00ffff"/>
<rect x="462" y="325" width="3" height="3" fill="#00ffff"/>
<rect x="466" y="320" width="3" height="3" fill="#00ffff"/>
<rect x="470" y="319" width="3" height="3" fill="#00ffff"/>
<rect x="474" y="319" width="3" height="3" fill="#00ffff"/>
<rect x="478" y="319" width="3" height="3" fill="#00ffff"/>
<rect x="482" y="319" width="3" height="3" fill="#00ffff"/>
<rect x="486" y="317" width="3" height="3" fill="#00ffff"/>
<rect x="490" y="316" width="3" height="3" fill="#00ffff"/>
<rect x="494" y="315" width="3" height="3" fill="#00ffff"/>
<rect x="498" y="311" width="3" height="3" fill="#00ffff"/>
<rect x="502" y="309" width="3" height="3" fill="#00ffff"/>
<rect x="506" y="307" width="3" height="3" fill="#00ffff"/>
<rect x="510" y="305" width="3" height="3" fill="#00ffff"/>
<rect x="514" y="299" width="3" height="3" fill="#00ffff"/>
<rect x="518" y="299" width="3" height="3" fill="#00ffff"/>
<rect x="522" y="299" width="3" height="3" fill="#00ffff"/>
<rect x="526" y="294" width="3" height="3" fill="#00ffff"/>
<rect x="530" y="290" width="3" height="3" fill="#00ffff"/>
<rect x="534" y="287" width="3" height="3" fill="#00ffff"/>
<rect x="538" y="282" width="3" height="3" fill="#00ffff"/>
<rect x="542" y="275" width="3" height="3" fill="#00ffff"/>
<rect x="546" y="268" width="3" height="3" fill="#00ffff"/>
<rect x="550" y="255" width="3" height="3" fill="#00ffff"/>
<rect x="554" y="250" width="3" height="3" fill="#00ffff"/>
<rect x="558" y="247" width="3" height="3" fill="#00ffff"/>
<rect x="562" y="242" width="3" height="3" fill="#00ffff"/>
<rect x="566" y="236" width="3" height="3" fill="#00ffff"/>
<rect x="570" y="234" width="3" height="3" fill="#00ffff"/>
<rect x="574" y="228" width="3" height="3" fill="#00ffff"/>
<rect x="578" y="219" width="3" height="3" fill="#00ffff"/>
<rect x="582" y="212" width="3" height="3" fill="#00ffff"/>
<rect x="586" y="196" width="3" height="3" fill="#00ffff"/>
<rect x="590" y="180" width="3" height="3" fill="#00ffff"/>
<rect x="594" y="172" width="3" height="3" fill="#00ffff"/>
<rect x="598" y="170" width="3" height="3" fill="#00ffff"/>
<text x="12.41" y="396" font-size="10" font-weight="normal" fill="#fff" textLength="63.47" lengthAdjust="spacingAndGlyphs" xml:space="preserve" stroke="#fff" stroke-width="0.3">RSI(8) 51.9797</text>
<text x="81.41" y="396" font-size="10" font-weight="normal" fill="#fff" textLength="81.31" lengthAdjust="spacingAndGlyphs" xml:space="preserve" stroke="#fff" stroke-width="0.3">=&gt;MA(14) 63.5627</text>
<text x="168.41" y="396" font-size="10" font-weight="normal" fill="#fff" textLength="122.50" lengthAdjust="spacingAndGlyphs" xml:space="preserve" stroke="#fff" stroke-width="0.3">Stoch(8,3,3) 26.4151 26.8245</text>
<text x="296.80" y="396" font-size="10" font-weight="normal" fill="#fff" textLength="107.31" lengthAdjust="spacingAndGlyphs" xml:space="preserve" stroke="#fff" stroke-width="0.3">OsMA(12,26,9) -0.000272</text>
<polyline points="9.0,463.0 16.8,459.4 26.5,458.2 43.3,459.4 60.0,460.6 72.0,464.2 84.0,467.8 98.6,467.8 100.0,471.6 107.7,468.5 115.5,466.9 121.6,466.1 132.0,458.0 143.3,449.9 151.0,446.8 161.8,442.2 172.6,438.3 183.5,435.2 192.7,433.7 199.9,430.8 200.0,430.6 215.5,429.8 230.9,432.9 243.3,438.3 254.1,444.5 264.9,450.7 274.2,454.6 285.0,455.3 300.0,454.6 312.0,448.6 324.0,449.8 336.0,451.0 360.0,451.0 384.2,452.2 396.2,449.8 400.1,448.4 407.7,451.5 415.5,454.6 429.4,454.6 444.8,447.6 464.9,447.6 474.2,443.0 489.6,439.9 499.9,437.5 500.1,437.5 510.8,429.8 521.6,423.6 534.0,415.9 546.4,409.7 558.7,405.1 575.7,405.1 586.6,409.7 600.0,414.4 608.3,422.0 621.5,431.7" fill="none" stroke="#7fffd4" stroke-width="2" stroke-linejoin="round" shape-rendering="crispEdges"/>
<polyline points="9.0,454.6 16.8,454.6 21.6,469.0 26.5,457.0 31.3,465.4 36.0,452.0 41.0,466.6 48.0,458.0 53.0,453.4 59.0,464.0 66.0,466.0 80.0,470.0 96.0,470.0 99.0,466.0 100.0,457.6 104.6,445.3 108.5,444.5 112.4,449.1 118.5,446.0 123.2,437.5 125.5,424.4 127.8,436.8 130.9,438.3 137.1,443.0 142.5,449.9 149.5,440.6 154.9,434.5 158.7,436.8 161.8,440.6 169.6,422.9 172.6,426.7 176.5,426.0 181.1,432.9 186.6,428.3 192.7,421.3 197.4,429.8 199.9,431.0 200.0,429.8 208.5,426.0 211.6,439.9 214.7,429.8 219.3,443.0 224.0,444.5 231.7,439.9 237.1,459.2 241.7,443.7 245.6,450.0 248.7,465.4 253.3,460.7 259.5,457.6 264.9,448.4 272.6,454.6 277.3,465.4 281.9,444.5 285.8,451.5 291.2,443.7 296.6,448.4 300.0,432.9 303.4,425.7 309.6,445.0 316.8,454.6 321.6,459.4 326.5,465.4 330.0,454.6 336.0,457.0 342.0,464.2 347.0,453.4 352.9,424.5 357.7,435.3 365.0,443.7 372.2,454.6 378.2,451.0 384.2,461.8 390.2,461.8 396.2,442.5 400.1,438.3 403.1,443.0 406.2,451.5 410.0,451.5 414.7,465.4 417.8,457.6 421.6,460.7 428.6,460.7 431.7,445.3 435.5,436.0 441.0,429.0 446.4,434.5 453.3,443.7 464.9,444.5 468.8,429.0 472.6,427.5 475.7,434.5 477.3,451.5 481.9,444.5 486.6,436.0 492.7,433.7 499.9,426.7 500.1,417.5 504.6,403.5 517.0,398.9 521.6,414.4 532.5,405.1 537.1,413.6 545.6,399.7 549.5,405.9 557.2,392.0 560.3,400.5 566.0,395.0 574.0,405.0 580.4,429.8 584.0,428.0 589.6,419.0 593.5,439.9 596.6,436.0 600.0,434.5 605.8,445.0 613.0,441.3 621.5,447.4" fill="none" stroke="#1e90ff" stroke-width="2" stroke-linejoin="round" shape-rendering="crispEdges"/>
<polyline points="9.0,431.7 17.3,422.0 24.0,440.0 28.9,486.0 32.5,478.6 36.0,483.0 41.0,481.0 47.0,486.0 53.0,443.7 57.7,452.0 63.7,478.6 69.8,483.0 74.6,493.0 81.8,505.0 89.0,507.5 96.2,502.7 100.0,464.6 104.6,446.8 107.7,423.6 111.6,396.6 115.5,393.5 120.9,397.4 124.7,394.3 129.4,403.5 133.2,419.0 137.1,442.2 140.2,453.0 143.3,456.1 146.4,465.4 149.5,469.2 153.3,453.8 158.7,436.0 164.1,414.4 168.8,391.2 172.6,395.8 177.3,400.5 180.4,415.9 186.6,420.5 192.0,418.2 196.6,425.2 199.9,434.0 200.0,434.5 206.2,444.5 210.8,443.7 214.7,453.8 217.8,448.4 221.6,460.7 225.5,455.3 229.4,466.1 233.2,449.1 237.9,459.2 244.8,459.2 251.0,460.7 257.2,459.2 261.8,446.8 266.5,434.5 272.6,426.0 277.3,434.5 280.4,431.4 285.0,439.9 289.6,428.3 292.7,432.9 297.4,424.4 300.0,418.2 303.4,404.0 306.0,404.0 310.8,413.7 314.4,445.0 319.2,473.8 325.3,499.0 330.0,483.4 338.5,461.8 345.7,435.3 352.9,400.4 357.7,400.4 362.5,418.5 369.8,452.2 377.0,483.4 381.8,496.7 387.8,490.7 392.6,489.5 397.4,459.4 400.1,420.5 401.5,409.7 405.4,409.7 409.3,423.6 412.4,449.9 415.5,471.6 419.0,478.0 421.7,478.6 424.7,471.6 428.6,460.7 433.2,434.5 437.9,412.8 441.7,395.0 446.4,400.5 452.5,408.2 458.7,423.6 464.9,440.6 468.0,443.7 472.6,429.0 477.3,431.4 481.9,443.7 485.8,454.6 491.2,428.3 499.9,402.8 500.1,397.4 506.2,399.7 517.0,393.5 521.6,402.0 527.0,405.1 533.2,402.8 540.2,409.0 544.8,406.6 551.0,412.0 554.1,420.5 557.2,407.4 566.0,400.0 575.7,405.1 580.4,415.9 585.0,434.5 588.9,419.0 594.3,423.6 598.1,437.5 600.0,450.0 601.0,459.4 605.8,465.4" fill="none" stroke="#ffff00" stroke-width="1" stroke-linejoin="round" shape-rendering="crispEdges"/>
<polyline points="9.0,434.0 16.8,429.0 21.6,434.0 26.5,447.0 31.0,471.0 37.3,481.0 43.3,482.0 48.0,474.0 57.7,454.6 63.7,460.6 72.0,481.0 79.4,495.5 86.6,505.0 93.8,505.0 99.8,498.0 100.0,495.0 103.0,485.0 105.4,473.9 107.7,456.1 112.4,425.2 117.0,400.5 120.9,395.8 124.7,395.0 128.6,398.1 133.2,405.1 137.1,417.5 141.0,436.0 144.0,453.0 150.0,458.0 157.2,453.0 161.8,434.5 166.5,415.9 171.1,403.5 175.7,395.8 180.4,403.5 185.0,412.0 189.6,418.2 193.5,418.2 199.9,425.5 200.0,426.0 206.2,437.5 213.9,446.8 218.5,448.4 224.7,454.6 230.1,460.7 235.5,456.1 241.7,453.0 246.4,456.1 252.5,459.2 258.0,460.7 261.8,453.0 266.5,437.5 272.6,431.4 277.3,429.0 281.9,431.4 287.3,435.2 292.7,432.9 300.0,426.7 301.0,416.0 309.6,408.9 314.4,428.0 319.2,457.0 324.0,481.0 328.9,491.9 333.7,485.8 338.5,473.8 344.5,452.0 350.5,428.0 355.3,408.9 361.3,402.9 367.4,425.7 372.2,447.4 377.0,471.4 383.0,489.5 389.0,494.3 393.8,488.2 398.6,464.2 400.1,457.6 404.6,428.3 409.3,413.6 413.9,436.0 419.3,459.2 424.7,471.6 428.0,468.0 432.5,449.9 437.9,426.7 443.3,409.7 449.5,399.7 455.6,408.2 461.8,420.5 468.0,436.0 471.9,437.5 478.1,432.1 483.5,439.1 488.9,442.2 494.3,428.3 499.9,412.8 500.1,411.3 507.7,397.4 517.0,394.3 523.2,398.1 532.5,404.3 541.0,406.6 549.5,409.7 554.9,409.7 566.0,402.0 575.7,404.3 580.4,411.3 585.0,420.5 589.6,424.4 595.8,425.2 600.0,436.0 601.0,440.0 608.3,465.4" fill="none" stroke="#ff0000" stroke-width="1" stroke-linejoin="round" shape-rendering="crispEdges"/>
<path d="M9 465H11V467H9zM11 464H15V467H11zM15 464H19V467H15zM19 464H23V467H19zM23 464H27V467H23zM27 467H31V471H27zM31 467H35V469H31zM35 467H39V469H35zM39 467H43V475H39zM43 467H47V479H43zM47 467H51V475H47zM51 467H55V472H51zM55 467H59V477H55zM59 467H63V479H59zM63 467H67V479H63zM67 467H71V480H67zM71 467H75V480H71zM75 467H79V483H75zM79 467H83V489H79zM83 467H87V490H83zM87 467H91V491H87zM91 467H95V490H91zM95 467H99V485H95zM99 467H103V476H99zM103 464H107V467H103zM107 455H111V467H107zM111 449H115V467H111zM115 448H119V467H115zM119 445H123V467H119zM123 438H127V467H123zM127 438H131V467H127zM131 441H135V467H131zM135 442H139V467H135zM139 449H143V467H139zM143 454H147V467H143zM147 454H151V467H147zM151 454H155V467H151zM155 454H159V467H155zM159 455H163V467H159zM163 455H167V467H163zM167 451H171V467H167zM171 451H175V467H171zM175 449H179V467H175zM179 451H183V467H179zM183 453H187V467H183zM187 453H191V467H187zM191 452H195V467H191zM195 455H199V467H195zM199 457H203V467H199zM203 459H207V467H203zM207 459H211V467H207zM211 463H215V467H211zM215 463H219V467H215zM219 466H223V467H219zM223 467H227V470H223zM227 467H231V470H227zM231 467H235V472H231zM235 467H239V475H235zM239 467H243V477H239zM243 467H247V477H243zM247 467H251V482H247zM251 467H255V482H251zM255 467H259V484H255zM259 467H263V484H259zM263 467H267V480H263zM267 467H271V477H267zM271 467H275V477H271zM275 467H279V477H275zM279 467H283V472H279zM283 467H287V472H283zM287 467H291V468H287zM291 465H295V467H291zM295 465H299V467H295zM299 459H303V467H299zM303 454H307V467H303zM307 454H311V467H307zM311 459H315V467H311zM315 464H319V467H315zM319 467H323V472H319zM323 467H327V477H323zM327 467H331V477H327zM331 467H335V480H331zM335 467H339V480H335zM339 467H343V480H339zM343 467H347V477H343zM347 467H351V470H347zM351 456H355V467H351zM355 456H359V467H355zM359 455H363V467H359zM363 456H367V467H363zM367 461H371V467H367zM371 465H375V467H371zM375 467H379V470H375zM379 467H383V470H379zM383 467H387V472H383zM387 467H391V477H387zM391 467H395V477H391zM395 467H399V470H395zM399 465H403V467H399zM403 465H407V467H403zM407 465H411V467H407zM411 467H415V470H411zM415 467H419V473H415zM419 467H423V473H419zM423 467H427V474H423zM427 467H431V476H427zM431 467H435V469H431zM435 464H439V467H435zM439 457H443V467H439zM443 453H447V467H443zM447 453H451V467H447zM451 456H455V467H451zM455 458H459V467H455zM459 460H463V467H459zM463 463H467V467H463zM467 462H471V467H467zM471 461H475V467H471zM475 464H479V467H475zM479 466H483V467H479zM483 465H487V467H483zM487 464H491V467H487zM491 464H495V467H491zM495 462H499V467H495zM499 456H503V467H499zM503 453H507V467H503zM507 447H511V467H507zM511 443H515V467H511zM515 439H519V467H515zM519 440H523V467H519zM523 441H527V467H523zM527 442H531V467H527zM531 444H535V467H531zM535 449H539V467H535zM539 454H543V467H539zM543 448H547V467H543zM547 447H551V467H547zM551 436H555V467H551zM555 416H559V467H555zM559 401H563V467H559zM563 393H567V467H563zM567 393H571V467H567zM571 390H575V467H571zM575 413H579V467H575zM579 431H583V467H579zM583 437H587V467H583zM587 442H591V467H587zM591 460H595V467H591zM595 467H599V472H595zM599 467H603V480H599zM603 467H607V487H603zM607 467H611V492H607zM611 467H615V499H611zM615 467H619V503H615zM619 467H623V510H619z" fill="#6b8e23" stroke="none" shape-rendering="crispEdges"/>
<rect x="8.5" y="108.5" width="754" height="272" fill="none" stroke="#fff"/>
<rect x="8.5" y="382.5" width="754" height="135" fill="none" stroke="#fff"/>
<path d="M605 109 h9 l-4.5 5z" fill="#708090"/>
</g>
</g>
<rect x="4" y="535" width="800" height="2" fill="#fff"/>
<rect x="4" y="537" width="800" height="1" fill="#000"/>
<rect x="4" y="538" width="798" height="19" fill="#ece9d8"/>
<rect x="5" y="538" width="1" height="18" fill="#8d8466"/>
<path d="M264.5 537 V555.5 H343.5 V537" fill="#fff" stroke="#000"/>
<rect x="265" y="535" width="78" height="3" fill="#fff"/>
<text x="18.41" y="550" font-size="10.5" font-weight="normal" fill="#7d7354" textLength="65.29" lengthAdjust="spacingAndGlyphs" xml:space="preserve" >USDJPY,Daily</text>
<text x="105.41" y="550" font-size="10.5" font-weight="normal" fill="#7d7354" textLength="67.29" lengthAdjust="spacingAndGlyphs" xml:space="preserve" >USDCHF,Daily</text>
<text x="195.42" y="550" font-size="10.5" font-weight="normal" fill="#7d7354" textLength="57.28" lengthAdjust="spacingAndGlyphs" xml:space="preserve" >GBPUSD,H4</text>
<text x="355.41" y="550" font-size="10.5" font-weight="normal" fill="#7d7354" textLength="67.29" lengthAdjust="spacingAndGlyphs" xml:space="preserve" >AUDUSD,Daily</text>
<rect x="96" y="541" width="1" height="12" fill="#8d8466"/>
<rect x="185" y="541" width="1" height="12" fill="#8d8466"/>
<rect x="436" y="541" width="1" height="12" fill="#8d8466"/>
<text x="274.41" y="550" font-size="10.5" font-weight="normal" fill="#000" textLength="59.28" lengthAdjust="spacingAndGlyphs" xml:space="preserve" >EURUSD,M5</text>
<path d="M778 543.5 l-3.5 3.5 3.5 3.5z M794 543.5 l3.5 3.5 -3.5 3.5z" fill="#a0a0a0"/>
<rect x="4" y="557" width="800" height="1" fill="#fff"/>
<rect x="4" y="558" width="800" height="20" fill="#ece9d8"/>
<rect x="84" y="560" width="1" height="16" fill="#d0cab4"/><rect x="85" y="560" width="1" height="16" fill="#fff"/>
<rect x="193" y="560" width="1" height="16" fill="#d0cab4"/><rect x="194" y="560" width="1" height="16" fill="#fff"/>
<rect x="295" y="560" width="1" height="16" fill="#d0cab4"/><rect x="296" y="560" width="1" height="16" fill="#fff"/>
<rect x="365" y="560" width="1" height="16" fill="#d0cab4"/><rect x="366" y="560" width="1" height="16" fill="#fff"/>
<rect x="438" y="560" width="1" height="16" fill="#d0cab4"/><rect x="439" y="560" width="1" height="16" fill="#fff"/>
<rect x="506" y="560" width="1" height="16" fill="#d0cab4"/><rect x="507" y="560" width="1" height="16" fill="#fff"/>
<rect x="577" y="560" width="1" height="16" fill="#d0cab4"/><rect x="578" y="560" width="1" height="16" fill="#fff"/>
<rect x="643" y="560" width="1" height="16" fill="#d0cab4"/><rect x="644" y="560" width="1" height="16" fill="#fff"/>
<path fill="#000" d="M7 563h8v1h-8zM23 563h1v1h-1zM26 563h1v1h-1zM33 563h1v1h-1zM49 563h1v1h-1zM59 563h1v1h-1zM65 563h1v1h-1zM72 563h1v1h-1zM77 563h1v1h-1zM14 564h1v1h-1zM23 564h1v1h-1zM27 564h1v1h-1zM31 564h5v1h-5zM37 564h4v1h-4zM43 564h4v1h-4zM49 564h1v1h-1zM60 564h1v1h-1zM62 564h7v1h-7zM72 564h1v1h-1zM78 564h1v1h-1zM8 565h7v1h-7zM18 565h11v1h-11zM33 565h1v1h-1zM37 565h1v1h-1zM40 565h1v1h-1zM43 565h1v1h-1zM46 565h1v1h-1zM49 565h1v1h-1zM60 565h1v1h-1zM65 565h1v1h-1zM70 565h11v1h-11zM14 566h1v1h-1zM23 566h1v1h-1zM31 566h5v1h-5zM37 566h1v1h-1zM39 566h1v1h-1zM43 566h1v1h-1zM46 566h1v1h-1zM48 566h5v1h-5zM63 566h5v1h-5zM72 566h1v1h-1zM75 566h1v1h-1zM77 566h1v1h-1zM80 566h1v1h-1zM7 567h8v1h-8zM20 567h1v1h-1zM23 567h1v1h-1zM26 567h1v1h-1zM33 567h1v1h-1zM37 567h1v1h-1zM40 567h1v1h-1zM43 567h4v1h-4zM49 567h1v1h-1zM52 567h1v1h-1zM58 567h3v1h-3zM65 567h1v1h-1zM72 567h1v1h-1zM74 567h1v1h-1zM77 567h1v1h-1zM13 568h1v1h-1zM21 568h1v1h-1zM23 568h1v1h-1zM25 568h1v1h-1zM30 568h6v1h-6zM37 568h4v1h-4zM43 568h1v1h-1zM46 568h1v1h-1zM49 568h1v1h-1zM52 568h1v1h-1zM60 568h1v1h-1zM62 568h7v1h-7zM72 568h2v1h-2zM75 568h6v1h-6zM6 569h11v1h-11zM22 569h3v1h-3zM32 569h1v1h-1zM35 569h1v1h-1zM37 569h1v1h-1zM43 569h4v1h-4zM49 569h1v1h-1zM52 569h1v1h-1zM60 569h1v1h-1zM63 569h1v1h-1zM67 569h1v1h-1zM71 569h2v1h-2zM76 569h1v1h-1zM79 569h1v1h-1zM8 570h1v1h-1zM13 570h1v1h-1zM21 570h1v1h-1zM23 570h1v1h-1zM25 570h1v1h-1zM31 570h9v1h-9zM43 570h1v1h-1zM46 570h1v1h-1zM49 570h1v1h-1zM52 570h1v1h-1zM60 570h1v1h-1zM63 570h5v1h-5zM70 570h1v1h-1zM72 570h1v1h-1zM75 570h2v1h-2zM79 570h1v1h-1zM9 571h1v1h-1zM13 571h1v1h-1zM20 571h1v1h-1zM23 571h1v1h-1zM26 571h1v1h-1zM32 571h1v1h-1zM35 571h1v1h-1zM39 571h1v1h-1zM43 571h1v1h-1zM45 571h4v1h-4zM52 571h1v1h-1zM56 571h2v1h-2zM60 571h1v1h-1zM63 571h1v1h-1zM67 571h1v1h-1zM72 571h1v1h-1zM77 571h2v1h-2zM11 572h1v1h-1zM13 572h1v1h-1zM18 572h2v1h-2zM23 572h1v1h-1zM27 572h2v1h-2zM32 572h1v1h-1zM35 572h1v1h-1zM38 572h2v1h-2zM42 572h3v1h-3zM48 572h1v1h-1zM50 572h1v1h-1zM52 572h1v1h-1zM57 572h1v1h-1zM60 572h2v1h-2zM63 572h5v1h-5zM72 572h1v1h-1zM76 572h1v1h-1zM78 572h1v1h-1zM12 573h1v1h-1zM22 573h2v1h-2zM35 573h1v1h-1zM47 573h1v1h-1zM51 573h1v1h-1zM56 573h1v1h-1zM60 573h1v1h-1zM63 573h1v1h-1zM67 573h1v1h-1zM70 573h3v1h-3zM74 573h2v1h-2zM79 573h2v1h-2z"/>
<text x="88.42" y="573" font-size="10.5" font-weight="normal" fill="#000" textLength="35.27" lengthAdjust="spacingAndGlyphs" xml:space="preserve" >Default</text>
<text x="196.41" y="573" font-size="10.5" font-weight="normal" fill="#000" textLength="88.29" lengthAdjust="spacingAndGlyphs" xml:space="preserve" >2006.05.30 02:20</text>
<text x="298.42" y="573" font-size="10.5" font-weight="normal" fill="#000" textLength="49.28" lengthAdjust="spacingAndGlyphs" xml:space="preserve" >O: 1.2754</text>
<text x="369.42" y="573" font-size="10.5" font-weight="normal" fill="#000" textLength="49.28" lengthAdjust="spacingAndGlyphs" xml:space="preserve" >H: 1.2754</text>
<text x="440.41" y="573" font-size="10.5" font-weight="normal" fill="#000" textLength="48.31" lengthAdjust="spacingAndGlyphs" xml:space="preserve" >L: 1.2751</text>
<text x="510.41" y="573" font-size="10.5" font-weight="normal" fill="#000" textLength="50.31" lengthAdjust="spacingAndGlyphs" xml:space="preserve" >C: 1.2752</text>
<text x="580.45" y="573" font-size="10.5" font-weight="normal" fill="#000" textLength="18.25" lengthAdjust="spacingAndGlyphs" xml:space="preserve" >V: 5</text>
<text x="702.42" y="573" font-size="10.5" font-weight="normal" fill="#000" textLength="37.28" lengthAdjust="spacingAndGlyphs" xml:space="preserve" >83/0 kb</text>
<rect x="648" y="563" width="2" height="5" fill="#3a8a1a"/><rect x="648" y="570.0" width="2" height="4.0" fill="#b02020" opacity="0.85"/>
<rect x="651" y="563" width="2" height="5" fill="#3a8a1a"/><rect x="651" y="569.4" width="2" height="4.6" fill="#b02020" opacity="0.85"/>
<rect x="654" y="563" width="2" height="5" fill="#3a8a1a"/><rect x="654" y="568.8" width="2" height="5.2" fill="#b02020" opacity="0.85"/>
<rect x="657" y="563" width="2" height="5" fill="#3a8a1a"/><rect x="657" y="568.2" width="2" height="5.8" fill="#b02020" opacity="0.85"/>
<rect x="660" y="563" width="2" height="5" fill="#3a8a1a"/><rect x="660" y="567.6" width="2" height="6.4" fill="#b02020" opacity="0.85"/>
<rect x="663" y="563" width="2" height="5" fill="#3a8a1a"/><rect x="663" y="567.0" width="2" height="7.0" fill="#b02020" opacity="0.85"/>
<rect x="666" y="563" width="2" height="5" fill="#3a8a1a"/><rect x="666" y="566.4" width="2" height="7.6" fill="#b02020" opacity="0.85"/>
<rect x="669" y="563" width="2" height="5" fill="#3a8a1a"/><rect x="669" y="565.8" width="2" height="8.2" fill="#b02020" opacity="0.85"/>
<rect x="672" y="563" width="2" height="5" fill="#3a8a1a"/><rect x="672" y="565.2" width="2" height="8.8" fill="#b02020" opacity="0.85"/>
<path d="M800 577 L803 574" stroke="#c4bfa8" stroke-width="1.2"/>
<path d="M796 577 L803 570" stroke="#c4bfa8" stroke-width="1.2"/>
<path d="M792 577 L803 566" stroke="#c4bfa8" stroke-width="1.2"/>
<rect x="4" y="578" width="800" height="4" fill="#84a0ce"/><rect x="4" y="577.5" width="800" height="1.2" fill="#3a5390"/>
<rect x="4" y="581" width="800" height="1" fill="#7591c3"/>
<rect x="25" y="580.5" width="26" height="1.5" rx="0.7" fill="#4e6aa3"/>
<rect x="173" y="580.5" width="489" height="1.5" rx="0.7" fill="#4e6aa3"/>
<rect x="668" y="580.5" width="132" height="1.5" rx="0.7" fill="#4e6aa3"/>
</svg>
</body></html>
